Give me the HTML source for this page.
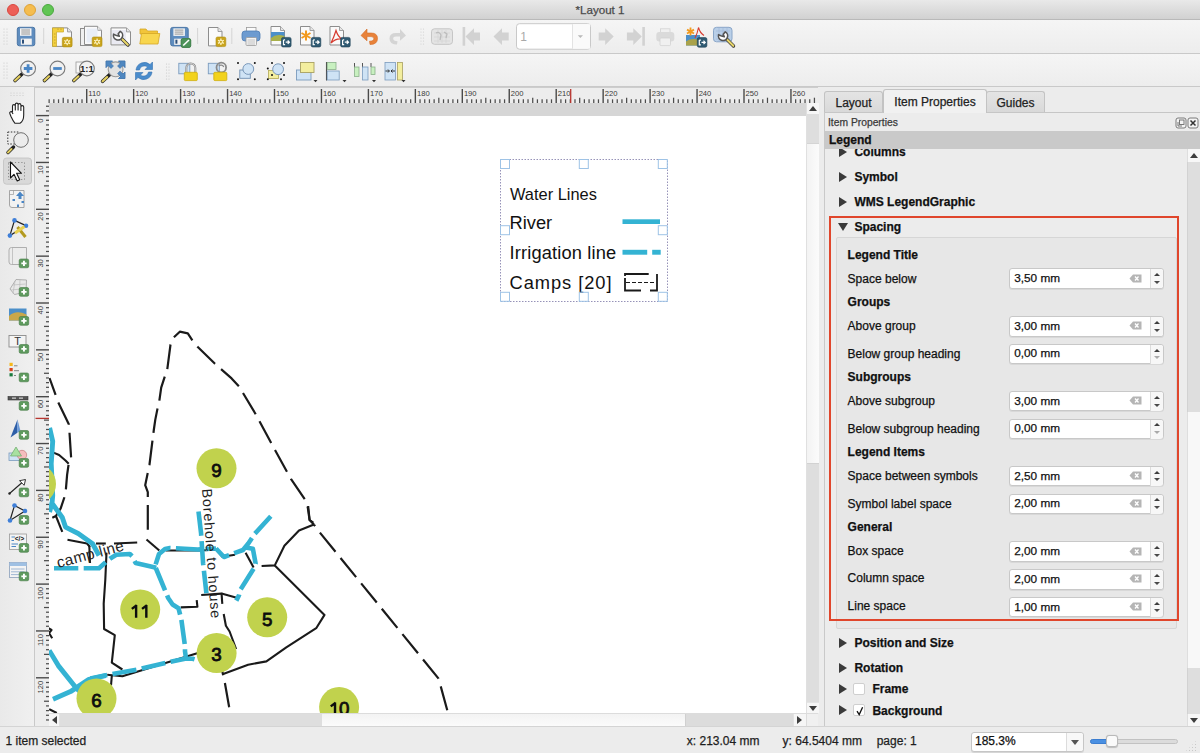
<!DOCTYPE html>
<html><head><meta charset="utf-8">
<style>
*{box-sizing:border-box;margin:0;padding:0}
html,body{width:1200px;height:753px;overflow:hidden;background:#ececec;font-family:"Liberation Sans",sans-serif;color:#111;-webkit-text-stroke:0.25px currentColor}
.a{position:absolute}
#title{left:0;top:0;width:1200px;height:20px;background:linear-gradient(#e9e9e9,#d1d1d1);border-bottom:1px solid #b9b9b9}
#title .t{left:0;width:1200px;top:3px;text-align:center;font-size:11.6px;color:#4a4a4a}
.tl{width:12px;height:12px;border-radius:50%;top:4px}
#tb1{left:0;top:20px;width:1200px;height:33.5px;background:linear-gradient(#f5f5f5,#ededed);border-bottom:1px solid #c9c9c9}
#tb2{left:0;top:53.5px;width:1200px;height:33.5px;background:linear-gradient(#f5f5f5,#ededed);border-bottom:1px solid #c9c9c9}
.grip{width:5px;height:20px;background-image:radial-gradient(circle,#c4c4c4 0.8px,transparent 1px);background-size:3px 3px}
.sep{width:1px;height:22px;background:#d6d6d6}
#rulerh{left:35px;top:87px;width:783px;height:16px;background:#ededed;overflow:hidden}
#rulerv{left:35px;top:103px;width:14px;height:623px;background:#ededed;overflow:hidden}
#canvas{left:49px;top:103px;width:757px;height:610px;background:#d6d6d6;overflow:hidden}
#page{left:0;top:13px;width:757px;height:600px;background:#fff}
#vscroll{left:806px;top:103px;width:12px;height:610px;background:#f4f4f4;border-left:1px solid #e0e0e0}
#hscroll{left:49px;top:713px;width:757px;height:13px;background:#f4f4f4;border-top:1px solid #dcdcdc}
#corner{left:806px;top:713px;width:12px;height:13px;background:#f0f0f0;border-left:1px solid #dcdcdc;border-top:1px solid #dcdcdc}
#toolbox{left:0;top:87px;width:35px;height:639px;background:linear-gradient(90deg,#e9e9e9,#f0f0f0);border-right:1px solid #c9c9c9}
#status{left:0;top:726px;width:1200px;height:27px;background:#ececec;border-top:1px solid #d4d4d4}
#status .s{top:7px;font-size:12px;color:#1e1e1e}
#panel{left:824px;top:112px;width:376px;height:614px;background:#ececec;border-left:1px solid #c9c9c9;border-top:1px solid #c6c6c6}
.tab{top:91px;height:21px;background:linear-gradient(#e4e4e4,#d9d9d9);border:1px solid #c3c3c3;border-bottom:none;border-radius:3px 3px 0 0;font-size:12px;text-align:center;padding-top:4px;color:#222}
.tab.sel{top:89px;height:24px;background:#f1f1f1;padding-top:5px}
.h{font-size:12px;font-weight:bold;color:#111}
.lb{font-size:12px;color:#1b1b1b}
.tri{width:0;height:0;border-top:5px solid transparent;border-bottom:5px solid transparent;border-left:8px solid #3a3a3a}
.trid{width:0;height:0;border-left:5.5px solid transparent;border-right:5.5px solid transparent;border-top:8px solid #3a3a3a}
.spin{width:155px;height:21px;background:#fff;border:1px solid #c8c8c8;border-radius:3px;box-shadow:0 1px 0 #d8d8d8}
.spin .v{left:4px;top:1.8px;font-size:11.8px;color:#111}
.spin .dv{left:140px;top:0;width:1px;height:19px;background:#dcdcdc}
.spin .bt{left:141px;top:0;width:12px;height:19px;background:#f7f7f7;border-radius:0 3px 3px 0}
.up{width:0;height:0;border-left:4px solid transparent;border-right:4px solid transparent;border-bottom:5px solid #4a4a4a}
.dn{width:0;height:0;border-left:4px solid transparent;border-right:4px solid transparent;border-top:5px solid #4a4a4a}
.clr{width:12px;height:8px}
.chk{width:12px;height:12px;background:#fff;border:1px solid #c9c9c9;border-radius:2px}
</style></head><body>

<!-- Title bar -->
<div id="title" class="a">
  <div class="a tl" style="left:7px;background:#ed5f57;border:0.5px solid #d9473f"></div>
  <div class="a tl" style="left:24px;background:#f5bd4f;border:0.5px solid #dea236"></div>
  <div class="a tl" style="left:42px;background:#61c554;border:0.5px solid #4aa93e"></div>
  <div class="a t">*Layout 1</div>
</div>

<!-- toolbars -->
<div id="tb1" class="a"></div>
<div id="tb2" class="a"></div>

<!-- left toolbox -->
<div id="toolbox" class="a"></div>
<svg class="a" style="left:0;top:0" width="1200" height="753"><g fill="#c8c8c8"><circle cx="4" cy="29" r="0.6"/><circle cx="4" cy="32" r="0.6"/><circle cx="4" cy="35" r="0.6"/><circle cx="4" cy="38" r="0.6"/><circle cx="4" cy="41" r="0.6"/><circle cx="4" cy="44" r="0.6"/><circle cx="7" cy="29" r="0.6"/><circle cx="7" cy="32" r="0.6"/><circle cx="7" cy="35" r="0.6"/><circle cx="7" cy="38" r="0.6"/><circle cx="7" cy="41" r="0.6"/><circle cx="7" cy="44" r="0.6"/></g><g transform="translate(16.8,26.8) scale(1)"><rect x="0.5" y="0.5" width="17.5" height="18.5" rx="2" fill="#5f8dbf" stroke="#4a76a6" stroke-width="1"/><rect x="3.2" y="1.5" width="11.5" height="7.5" fill="#f4f4f4"/><path d="M4.5 3.2 H13.2 M4.5 5.2 H13.2 M4.5 7.2 H13.2" stroke="#8a8a8a" stroke-width="0.9"/><rect x="4" y="11.8" width="11" height="6.2" fill="#f2f2f2"/><rect x="5.2" y="12.8" width="2" height="4" fill="#2b4f7a"/></g><line x1="43.7" y1="28" x2="43.7" y2="44" stroke="#d4d4d4"/><path d="M52.5 27.9 H67.5 L71.5 31.9 V46.4 H52.5 Z" fill="#fafafa" stroke="#8d8d8d" stroke-width="1"/><path d="M67.5 27.9 V31.9 H71.5" fill="#e6e6e6" stroke="#8d8d8d" stroke-width="0.8"/><path d="M52.5 27.9 H63.5 V32 H56.5 V46.4 H52.5 Z" fill="#f3d03e" stroke="#c9a82a" stroke-width="0.7"/><path d="M54 34 H55.5 M54 37 H55.5 M54 40 H55.5 M54 43 H55.5 M58 28.5 V30 M61 28.5 V30" stroke="#a8862a" stroke-width="0.6"/><rect x="62.3" y="37.3" width="9.8" height="9.6" rx="1.5" fill="#c9a41c" stroke="#b08e10" stroke-width="0.6"/><path d="M67.2 38.9 V45.3 M64.3 40.5 L70.1 43.699999999999996 M70.1 40.5 L64.3 43.699999999999996" stroke="#fff6c8" stroke-width="1.2"/><circle cx="67.2" cy="42.099999999999994" r="1.6" fill="#c9a41c" stroke="#fff6c8" stroke-width="0.9"/><rect x="80.5" y="28.5" width="16" height="17" fill="#f0f0f0" stroke="#8d8d8d"/><path d="M84.5 26.3 H97.5 L101.5 30.3 V44.5 H84.5 Z" fill="#fafafa" stroke="#8d8d8d" stroke-width="1"/><path d="M97.5 26.3 V30.3 H101.5" fill="#e6e6e6" stroke="#8d8d8d" stroke-width="0.8"/><rect x="86.5" y="28.5" width="11" height="14" fill="#e9eef7"/><rect x="92.2" y="37" width="9.8" height="9.6" rx="1.5" fill="#c9a41c" stroke="#b08e10" stroke-width="0.6"/><path d="M97.10000000000001 38.6 V45 M94.2 40.2 L100.0 43.4 M100.0 40.2 L94.2 43.4" stroke="#fff6c8" stroke-width="1.2"/><circle cx="97.10000000000001" cy="41.8" r="1.6" fill="#c9a41c" stroke="#fff6c8" stroke-width="0.9"/><path d="M111.0 27.9 H126.5 L130.5 31.9 V44.9 H111.0 Z" fill="#fafafa" stroke="#8d8d8d" stroke-width="1"/><path d="M126.5 27.9 V31.9 H130.5" fill="#e6e6e6" stroke="#8d8d8d" stroke-width="0.8"/><rect x="112" y="30" width="14" height="14" fill="#eaeaf2"/><path d="M119 36 L128 45" stroke="#333" stroke-width="3.4" stroke-linecap="round"/><path d="M121.5 38.5 L127.8 44.8" stroke="#e8d66a" stroke-width="2.1" stroke-linecap="round"/><path d="M113.6 34.2 A4.6 4.6 0 1 0 120.3 31.4 L118.2 33.8 L119.3 36.3 L116.6 35.6 Z" fill="#fff" stroke="#555" stroke-width="1.6" stroke-linejoin="round"/><path d="M140 29 H146 L147.5 31 H157.5 V34 H140 Z" fill="#f2c53a" stroke="#d5a726" stroke-width="0.8"/><path d="M139.8 44 L141.5 33.5 H159.8 L158 44 Z" fill="#f8d64e" stroke="#d5a726" stroke-width="0.8"/><g transform="translate(170.2,26.9) scale(1)"><rect x="0.5" y="0.5" width="17.5" height="18.5" rx="2" fill="#5f8dbf" stroke="#4a76a6" stroke-width="1"/><rect x="3.2" y="1.5" width="11.5" height="7.5" fill="#f4f4f4"/><path d="M4.5 3.2 H13.2 M4.5 5.2 H13.2 M4.5 7.2 H13.2" stroke="#8a8a8a" stroke-width="0.9"/><rect x="4" y="11.8" width="11" height="6.2" fill="#f2f2f2"/><rect x="5.2" y="12.8" width="2" height="4" fill="#2b4f7a"/></g><rect x="181.2" y="38.6" width="9.5" height="8.8" rx="1.6" fill="#4f9a5a" stroke="#447a44" stroke-width="0.6"/><path d="M185.95 40.4 V45.6 M183.29999999999998 43.0 H188.6" stroke="#fff" stroke-width="1.9"/><rect x="181.2" y="38.6" width="9.5" height="8.8" rx="1.6" fill="#4d935a" stroke="#3a7a46" stroke-width="0.6"/><path d="M183.2 45.5 L189 40" stroke="#fff" stroke-width="1.6"/><line x1="197.6" y1="28" x2="197.6" y2="44" stroke="#d4d4d4"/><path d="M208.5 27.5 H218.0 L222.0 31.5 V45.9 H208.5 Z" fill="#fafafa" stroke="#8d8d8d" stroke-width="1"/><path d="M218.0 27.5 V31.5 H222.0" fill="#e6e6e6" stroke="#8d8d8d" stroke-width="0.8"/><rect x="216" y="37" width="9.8" height="9.6" rx="1.5" fill="#c9a41c" stroke="#b08e10" stroke-width="0.6"/><path d="M220.9 38.6 V45 M218 40.2 L223.8 43.4 M223.8 40.2 L218 43.4" stroke="#fff6c8" stroke-width="1.2"/><circle cx="220.9" cy="41.8" r="1.6" fill="#c9a41c" stroke="#fff6c8" stroke-width="0.9"/><line x1="231.8" y1="28" x2="231.8" y2="44" stroke="#d4d4d4"/><rect x="246.5" y="27.5" width="9.5" height="5" fill="#fbfbfb" stroke="#9a9a9a" stroke-width="0.8"/><rect x="242" y="31" width="18" height="10" rx="3" fill="#6d9bd0" stroke="#4e7db5" stroke-width="0.8"/><rect x="246" y="37.5" width="10.5" height="8" rx="1" fill="#f3f3f3" stroke="#9a9a9a" stroke-width="0.8"/><path d="M247.5 40 H255 M247.5 42 H255 M247.5 44 H255" stroke="#b0b0b0" stroke-width="0.7"/><path d="M271.0 26.5 H280.5 L284.5 30.5 V45.0 H271.0 Z" fill="#fafafa" stroke="#8d8d8d" stroke-width="1"/><path d="M280.5 26.5 V30.5 H284.5" fill="#e6e6e6" stroke="#8d8d8d" stroke-width="0.8"/><rect x="271" y="32" width="13.5" height="9" fill="#4c8fc9"/><path d="M271 38 Q276 33.5 284.5 36 V41 H271 Z" fill="#a9b04a"/><rect x="281.5" y="37.4" width="9.6" height="9.6" rx="1.6" fill="#2f5a72" stroke="#1f4256" stroke-width="0.6"/><path d="M283.5 39.9 V44.6 H285.1 M283.5 39.9 H285.1 M285.7 42.199999999999996 H289.3 M287.7 40.5 L289.4 42.199999999999996 L287.7 43.9" fill="none" stroke="#fff" stroke-width="1.2"/><path d="M300.5 26.5 H310.0 L314.0 30.5 V45.0 H300.5 Z" fill="#fafafa" stroke="#8d8d8d" stroke-width="1"/><path d="M310.0 26.5 V30.5 H314.0" fill="#e6e6e6" stroke="#8d8d8d" stroke-width="0.8"/><path d="M306 30.5 V40.5 M301.5 33 L310.5 38 M310.5 33 L301.5 38" stroke="#f29a1e" stroke-width="2"/><rect x="311.2" y="37.4" width="9.6" height="9.6" rx="1.6" fill="#2f5a72" stroke="#1f4256" stroke-width="0.6"/><path d="M313.2 39.9 V44.6 H314.8 M313.2 39.9 H314.8 M315.4 42.199999999999996 H319.0 M317.4 40.5 L319.09999999999997 42.199999999999996 L317.4 43.9" fill="none" stroke="#fff" stroke-width="1.2"/><path d="M330.0 26.5 H339.5 L343.5 30.5 V45.0 H330.0 Z" fill="#fafafa" stroke="#8d8d8d" stroke-width="1"/><path d="M339.5 26.5 V30.5 H343.5" fill="#e6e6e6" stroke="#8d8d8d" stroke-width="0.8"/><path d="M331 43 Q334 37 336 30.5 Q338 37 342 39 Q336 38 331 43" fill="none" stroke="#d63a2e" stroke-width="1.2"/><rect x="340.6" y="37.4" width="9.6" height="9.6" rx="1.6" fill="#2f5a72" stroke="#1f4256" stroke-width="0.6"/><path d="M342.6 39.9 V44.6 H344.20000000000005 M342.6 39.9 H344.20000000000005 M344.8 42.199999999999996 H348.40000000000003 M346.8 40.5 L348.5 42.199999999999996 L346.8 43.9" fill="none" stroke="#fff" stroke-width="1.2"/><path d="M361 35.5 L367 29 V33 H371 Q377.5 33 377.5 38.5 Q377.5 44.5 370 44.5 L369.5 41.2 Q373.8 41.2 373.8 38.6 Q373.8 36.6 371 36.6 H367 V40.8 Z" fill="#e8823a" stroke="#d56c24" stroke-width="0.6"/><path d="M406 35.5 L400 29 V33 H396 Q389.5 33 389.5 38.5 Q389.5 44.5 397 44.5 L397.5 41.2 Q393.2 41.2 393.2 38.6 Q393.2 36.6 396 36.6 H400 V40.8 Z" fill="#d4d4d4"/><g fill="#cfcfcf"><circle cx="421" cy="29" r="0.6"/><circle cx="421" cy="32" r="0.6"/><circle cx="421" cy="35" r="0.6"/><circle cx="421" cy="38" r="0.6"/><circle cx="421" cy="41" r="0.6"/><circle cx="421" cy="44" r="0.6"/><circle cx="423.5" cy="29" r="0.6"/><circle cx="423.5" cy="32" r="0.6"/><circle cx="423.5" cy="35" r="0.6"/><circle cx="423.5" cy="38" r="0.6"/><circle cx="423.5" cy="41" r="0.6"/><circle cx="423.5" cy="44" r="0.6"/></g><rect x="431.5" y="28.8" width="21" height="15.5" rx="3" fill="#e4e4e4" stroke="#c6c6c6" stroke-width="1"/><path d="M434 33 H450 M434 37 H450 M434 41 H450 M438 30 V43 M442 30 V43 M446 30 V43" stroke="#d0d0d0" stroke-width="0.6"/><path d="M436 33 Q439 31 441 35 L440 40 M444 32 L447 34 L446 38" stroke="#bcbcbc" stroke-width="1.3" fill="none"/><rect x="462.6" y="27" width="2.6" height="18.7" fill="#d2d2d2"/><path d="M465.5 36.5 L474 28.3 V32.5 H480 V40.5 H474 V45 Z" fill="#d2d2d2"/><path d="M493.5 36.5 L502 28.3 V32.5 H508.7 V40.5 H502 V45 Z" fill="#d2d2d2"/><path d="M613.7 36.5 L605.2 28.3 V32.5 H598.7 V40.5 H605.2 V45 Z" fill="#d2d2d2"/><path d="M641.8 36.5 L633.3 28.3 V32.5 H626.9 V40.5 H633.3 V45 Z" fill="#d2d2d2"/><rect x="642.3" y="27" width="2.6" height="18.7" fill="#d2d2d2"/><rect x="516.5" y="23.7" width="74" height="25.5" rx="3" fill="#fff" stroke="#c9c9c9" stroke-width="1"/><path d="M572.6 24.2 V48.7" stroke="#e0e0e0"/><rect x="573" y="24.2" width="17" height="24.5" fill="#fafafa"/><path d="M577.8 35.2 H583 L580.4 38 Z" fill="#b9b9b9"/><text x="520.3" y="41" font-size="12" fill="#a9a9a9" font-family="Liberation Sans">1</text><rect x="660.5" y="28.8" width="9.5" height="4.5" fill="#f0f0f0" stroke="#d2d2d2" stroke-width="0.8"/><rect x="656.3" y="32" width="18" height="9.5" rx="3" fill="#dadada"/><rect x="660" y="38" width="10.5" height="7.6" rx="1" fill="#f0f0f0" stroke="#d2d2d2" stroke-width="0.8"/><rect x="686" y="35" width="14" height="10.5" fill="#4c8fc9"/><path d="M686 41.5 Q691 37.5 700 40 V45.5 H686 Z" fill="#a9a24a"/><path d="M690.5 27.6 V35.5 M687 29.6 L694 33.5 M694 29.6 L687 33.5" stroke="#f29a1e" stroke-width="1.8"/><path d="M695 38 Q697.5 33 698.5 27.5 Q700 33 704 35.5" fill="none" stroke="#d63a2e" stroke-width="1.1"/><rect x="697.3" y="37.6" width="9.6" height="9.6" rx="1.6" fill="#2f5a72" stroke="#1f4256" stroke-width="0.6"/><path d="M699.3 40.1 V44.800000000000004 H700.9 M699.3 40.1 H700.9 M701.5 42.4 H705.0999999999999 M703.5 40.7 L705.1999999999999 42.4 L703.5 44.1" fill="none" stroke="#fff" stroke-width="1.2"/><rect x="713.5" y="27.3" width="18.5" height="14.5" rx="3" fill="#b9cfe8" stroke="#8aa6c8" stroke-width="1"/><path d="M716 31 H730 M716 35 H730 M716 39 H730 M719 28 V41 M723 28 V41 M727 28 V41" stroke="#9fb6d4" stroke-width="0.6"/><path d="M724 36.5 L733.5 46" stroke="#333" stroke-width="3.4" stroke-linecap="round"/><path d="M726.5 39 L733.3 45.8" stroke="#e8d66a" stroke-width="2.1" stroke-linecap="round"/><path d="M718.6 34.7 A4.6 4.6 0 1 0 725.3 31.9 L723.2 34.3 L724.3 36.8 L721.6 36.1 Z" fill="#fff" stroke="#555" stroke-width="1.6" stroke-linejoin="round"/><g fill="#c8c8c8"><circle cx="4" cy="63" r="0.6"/><circle cx="4" cy="66" r="0.6"/><circle cx="4" cy="69" r="0.6"/><circle cx="4" cy="72" r="0.6"/><circle cx="4" cy="75" r="0.6"/><circle cx="4" cy="78" r="0.6"/><circle cx="7" cy="63" r="0.6"/><circle cx="7" cy="66" r="0.6"/><circle cx="7" cy="69" r="0.6"/><circle cx="7" cy="72" r="0.6"/><circle cx="7" cy="75" r="0.6"/><circle cx="7" cy="78" r="0.6"/></g><path d="M15.100000000000001 80.5 L22.6 73.5" stroke="#222" stroke-width="3.6" stroke-linecap="round"/><path d="M15.100000000000001 80.5 L19.6 76.3" stroke="#e3cf62" stroke-width="2.2" stroke-linecap="round"/><circle cx="28.1" cy="68.5" r="7.4" fill="#f1f1f1" stroke="#7b7b7b" stroke-width="1.1"/><path d="M28.1 64.2 V72.8 M23.8 68.5 H32.4" stroke="#4a86c5" stroke-width="2.8"/><path d="M44.5 80.5 L52.0 73.5" stroke="#222" stroke-width="3.6" stroke-linecap="round"/><path d="M44.5 80.5 L49.0 76.3" stroke="#e3cf62" stroke-width="2.2" stroke-linecap="round"/><circle cx="57.5" cy="68.5" r="7.4" fill="#f1f1f1" stroke="#7b7b7b" stroke-width="1.1"/><path d="M53.2 68.5 H61.8" stroke="#4a86c5" stroke-width="2.8"/><rect x="76" y="62" width="7" height="11" fill="#f7f7f7" stroke="#9a9a9a" stroke-width="0.8"/><path d="M73.9 80.5 L81.4 73.5" stroke="#222" stroke-width="3.6" stroke-linecap="round"/><path d="M73.9 80.5 L78.4 76.3" stroke="#e3cf62" stroke-width="2.2" stroke-linecap="round"/><circle cx="86.9" cy="68.5" r="7.4" fill="#f1f1f1" stroke="#7b7b7b" stroke-width="1.1"/><text x="86.9" y="72.3" text-anchor="middle" font-size="9.5" font-weight="bold" fill="#222" font-family="Liberation Sans">1:1</text><rect x="106" y="61" width="19" height="17.5" fill="#ededed"/><path d="M106 61 H112.5 L110.5 63 L113.5 66 L111 68.5 L108 65.5 L106 67.5 Z M125 61 V67.5 L123 65.5 L120 68.5 L117.5 66 L120.5 63 L118.5 61 Z M125 78.5 H118.5 L120.5 76.5 L117.5 73.5 L120 71 L123 74 L125 72 Z" fill="#4f87c0" stroke="#3a6ea6" stroke-width="0.5"/><path d="M102.6 81.3 L110.1 74.3" stroke="#222" stroke-width="3.6" stroke-linecap="round"/><path d="M102.6 81.3 L107.1 77.1" stroke="#e3cf62" stroke-width="2.2" stroke-linecap="round"/><circle cx="115.6" cy="69.3" r="7.4" fill="#e2e2e2" stroke="#9a9a9a" stroke-width="1.1"/><circle cx="115.6" cy="69.3" r="0" /><path d="M106 61 H112.5 L110.5 63 L113.5 66 L111 68.5 L108 65.5 L106 67.5 Z M125 61 V67.5 L123 65.5 L120 68.5 L117.5 66 L120.5 63 L118.5 61 Z M125 78.5 H118.5 L120.5 76.5 L117.5 73.5 L120 71 L123 74 L125 72 Z" fill="#4f87c0" stroke="#3a6ea6" stroke-width="0.5"/><path d="M136 70 A8.5 8.5 0 0 1 150 64.5 L152.5 62 V69.5 H145 L147.5 67 A5 5 0 0 0 139.5 70 Z" fill="#4a8ccc" stroke="#3572b0" stroke-width="0.6"/><path d="M152 72 A8.5 8.5 0 0 1 138 77.5 L135.5 80 V72.5 H143 L140.5 75 A5 5 0 0 0 148.5 72 Z" fill="#4a8ccc" stroke="#3572b0" stroke-width="0.6"/><g fill="#c8c8c8"><circle cx="166.5" cy="64" r="0.6"/><circle cx="166.5" cy="67" r="0.6"/><circle cx="166.5" cy="70" r="0.6"/><circle cx="166.5" cy="73" r="0.6"/><circle cx="166.5" cy="76" r="0.6"/><circle cx="166.5" cy="79" r="0.6"/><circle cx="169" cy="64" r="0.6"/><circle cx="169" cy="67" r="0.6"/><circle cx="169" cy="70" r="0.6"/><circle cx="169" cy="73" r="0.6"/><circle cx="169" cy="76" r="0.6"/><circle cx="169" cy="79" r="0.6"/></g><rect x="178.8" y="63.3" width="11" height="10.5" fill="#cfe3f5" stroke="#7b9bbd" stroke-width="0.9"/><path d="M186.3 73 V68 A4.5 4.5 0 0 1 195.3 68 V73" fill="none" stroke="#8a8a8a" stroke-width="2"/><path d="M186.3 73 V68 A4.5 4.5 0 0 1 195.3 68 V73" fill="none" stroke="#d9d9d9" stroke-width="0.8"/><rect x="184.3" y="72.3" width="13" height="8.3" rx="1" fill="#f2d21c" stroke="#cfae0a" stroke-width="0.8"/><rect x="208.3" y="63.3" width="11" height="10.5" fill="#cfe3f5" stroke="#7b9bbd" stroke-width="0.9"/><circle cx="221.3" cy="67.5" r="4.8" fill="none" stroke="#8a8a8a" stroke-width="1.8"/><path d="M218.8 66 A3 3 0 0 1 223.8 67" fill="none" stroke="#8a8a8a" stroke-width="1.2"/><rect x="213.8" y="72.3" width="13" height="8.3" rx="1" fill="#f2d21c" stroke="#cfae0a" stroke-width="0.8"/><rect x="239.8" y="70" width="10.5" height="8.3" fill="#cfe3f5" stroke="#6f8fb2" stroke-width="0.9"/><circle cx="248.3" cy="69" r="5.4" fill="#cfe3f5" stroke="#6f8fb2" stroke-width="0.9"/><g fill="#111"><circle cx="238" cy="63" r="1"/><circle cx="238" cy="79.3" r="1"/><circle cx="254.8" cy="63" r="1"/><circle cx="254.8" cy="79.3" r="1"/></g><rect x="268.5" y="70.5" width="10" height="8" fill="#f3ee9e" stroke="#b9b060" stroke-width="0.9"/><circle cx="278.1" cy="69.2" r="5.4" fill="#cfe3f5" stroke="#6f8fb2" stroke-width="0.9"/><g fill="#111"><circle cx="272" cy="63" r="1"/><circle cx="284" cy="63" r="1"/><circle cx="267.8" cy="68.5" r="1"/><circle cx="284" cy="75" r="1"/><circle cx="267.8" cy="79.3" r="1"/><circle cx="281" cy="79.3" r="1"/><circle cx="272" cy="75" r="1"/></g><rect x="296.5" y="70" width="14.5" height="10" fill="#cfe3f5" stroke="#7b9bbd" stroke-width="0.9"/><rect x="300.5" y="62.5" width="13.5" height="10" fill="#f3ee9e" stroke="#a8a060" stroke-width="0.9"/><path d="M313.5 80 H317.5 L315.5 82.3 Z" fill="#333"/><path d="M326.5 62 V80.5" stroke="#444" stroke-width="1.1"/><rect x="327.2" y="62.5" width="8.8" height="7" fill="#c8f0c0" stroke="#8ab08a" stroke-width="0.8"/><rect x="327.2" y="71" width="12" height="9" fill="#cfe3f5" stroke="#7b9bbd" stroke-width="0.8"/><path d="M342.5 80 H346.5 L344.5 82.3 Z" fill="#333"/><path d="M354.5 63 V68 M362.5 63 V68 M371 63 V67" stroke="#555" stroke-width="1"/><rect x="354.5" y="67" width="4.5" height="9.5" fill="#c8f0c0" stroke="#8ab08a" stroke-width="0.8"/><rect x="362.5" y="67" width="5.5" height="13" fill="#cfe3f5" stroke="#7b9bbd" stroke-width="0.8"/><rect x="371" y="67" width="4" height="7.5" fill="#c8f0c0" stroke="#8ab08a" stroke-width="0.8"/><path d="M372 80 H376 L374 82.3 Z" fill="#333"/><rect x="385" y="62.5" width="10.5" height="17.5" fill="#cfe3f5" stroke="#7b9bbd" stroke-width="0.8"/><rect x="397.5" y="62.5" width="5" height="17.5" fill="#f3ee9e" stroke="#a8a060" stroke-width="0.8"/><path d="M385.5 71 H389 M388 69.5 L389.5 71 L388 72.5 M395 71 H391.5 M392.5 69.5 L391 71 L392.5 72.5" stroke="#222" stroke-width="0.9" fill="none"/><path d="M401.5 80 H405.5 L403.5 82.3 Z" fill="#333"/><g fill="#c8c8c8"><circle cx="11" cy="93" r="0.55"/><circle cx="11" cy="95.5" r="0.55"/><circle cx="14" cy="93" r="0.55"/><circle cx="14" cy="95.5" r="0.55"/><circle cx="17" cy="93" r="0.55"/><circle cx="17" cy="95.5" r="0.55"/><circle cx="20" cy="93" r="0.55"/><circle cx="20" cy="95.5" r="0.55"/><circle cx="23" cy="93" r="0.55"/><circle cx="23" cy="95.5" r="0.55"/></g><path d="M12.5 112 V106 A1.4 1.4 0 0 1 15.3 106 V110 V104.5 A1.4 1.4 0 0 1 18.1 104.5 V110 V105 A1.4 1.4 0 0 1 20.9 105 V110.5 V107 A1.4 1.4 0 0 1 23.7 107 V115 Q23.7 121 20 123.3 H15 Q13 121 11 116.5 L9.8 113.5 A1.3 1.3 0 0 1 12.3 112.5 L13 114" fill="#fff" stroke="#222" stroke-width="1.1" stroke-linejoin="round"/><rect x="7.8" y="132" width="11" height="12" fill="none" stroke="#333" stroke-width="1" stroke-dasharray="1.5 1.5"/><path d="M8 152.5 L13.5 147" stroke="#222" stroke-width="3.4" stroke-linecap="round"/><path d="M8 152.5 L11.5 149" stroke="#e3cf62" stroke-width="2" stroke-linecap="round"/><circle cx="21" cy="140" r="7.3" fill="#ececec" stroke="#6f6f6f" stroke-width="1"/><rect x="3.5" y="158" width="28" height="26.2" rx="3" fill="#d9d9d9" stroke="#c4c4c4" stroke-width="0.9"/><rect x="8.5" y="162.5" width="16" height="17" fill="none" stroke="#777" stroke-width="0.8" stroke-dasharray="1.2 2"/><path d="M10.5 162 V178 L14 174.3 L17.2 181 L19.7 179.8 L16.6 173.3 H21.5 Z" fill="#fff" stroke="#111" stroke-width="1.1" stroke-linejoin="round"/><path d="M9.5 190.5 H24 V207.5 H12 Q9.5 207.5 9.5 205 Z" fill="#f2f2f2" stroke="#9c9c9c" stroke-width="0.9"/><path d="M13.5 194.5 V190.5 M9.5 194.5 H13.5" stroke="#9c9c9c" stroke-width="0.7"/><path d="M20 191.5 L24 196 H21.5 V199 H18.5 V196 H16 Z" fill="#4a86c5"/><path d="M12.5 199 H15 V201 H12.5 Z M21.5 201 H24 V203 H21.5 Z M17 204.5 H19 V207 H17 Z" fill="#4a86c5"/><path d="M14.5 220.4 L26 225.7 L9.9 235.6 Z" fill="none" stroke="#222" stroke-width="1.2"/><circle cx="14.5" cy="220.4" r="2.3" fill="#3f7fd8"/><circle cx="26" cy="225.7" r="2.3" fill="#3f7fd8"/><circle cx="9.9" cy="235.6" r="2.3" fill="#3f7fd8"/><path d="M17.5 227 L25.5 237" stroke="#b39a20" stroke-width="3"/><path d="M15 233 L24.5 226.5" stroke="#e8d050" stroke-width="3.2"/><path d="M11.5 247.5 H26.5 V264.5 H11.5 Q9 264.5 9 262.0 V250.0 Q9 247.5 11.5 247.5 Z" fill="#ececec" stroke="#a8a8a8" stroke-width="0.9"/><path d="M12.5 248.0 V264.0" stroke="#c4c4c4" stroke-width="1"/><rect x="19.2" y="259" width="9.5" height="8.8" rx="1.6" fill="#5e9a5e" stroke="#447a44" stroke-width="0.6"/><path d="M23.95 260.8 V266 M21.3 263.4 H26.6" stroke="#fff" stroke-width="1.9"/><path d="M10 289 L16 279.5 L26.5 280 L26 292 L14.5 294.5 Z" fill="#e8e8e8" stroke="#a8a8a8" stroke-width="0.9"/><path d="M12.5 285 L25.5 284 M11 290 L26 288.5 M15 281 L13 293.5 M20 280 L19.5 293.5" stroke="#bcbcbc" stroke-width="0.7"/><rect x="19.2" y="287.5" width="9.5" height="8.8" rx="1.6" fill="#5e9a5e" stroke="#447a44" stroke-width="0.6"/><path d="M23.95 289.3 V294.5 M21.3 291.9 H26.6" stroke="#fff" stroke-width="1.9"/><rect x="9" y="308.5" width="17.5" height="12" fill="#4c8fc9"/><path d="M9 316 Q16 309.5 26.5 314.5 V320.5 H9 Z" fill="#c9a74a"/><rect x="19.2" y="316.5" width="9.5" height="8.8" rx="1.6" fill="#5e9a5e" stroke="#447a44" stroke-width="0.6"/><path d="M23.95 318.3 V323.5 M21.3 320.9 H26.6" stroke="#fff" stroke-width="1.9"/><rect x="9" y="335.5" width="17" height="11.5" fill="#f4f4f4" stroke="#8c8c8c" stroke-width="0.9"/><text x="17.5" y="345.3" text-anchor="middle" font-size="11" fill="#333" font-family="Liberation Sans">T</text><rect x="19.2" y="344.5" width="9.5" height="8.8" rx="1.6" fill="#5e9a5e" stroke="#447a44" stroke-width="0.6"/><path d="M23.95 346.3 V351.5 M21.3 348.9 H26.6" stroke="#fff" stroke-width="1.9"/><rect x="9.5" y="362.8" width="3.2" height="3.2" fill="#f6b81a"/><rect x="9.5" y="368" width="3.2" height="3.2" fill="#d9421c"/><rect x="9.5" y="373.2" width="3.2" height="3.2" fill="#187a3c"/><path d="M14 365.8 H17.5 M14 370.7 H19 M14 375.5 H16" stroke="#777" stroke-width="0.9"/><rect x="19.2" y="373" width="9.5" height="8.8" rx="1.6" fill="#5e9a5e" stroke="#447a44" stroke-width="0.6"/><path d="M23.95 374.8 V380 M21.3 377.4 H26.6" stroke="#fff" stroke-width="1.9"/><rect x="8" y="396.5" width="20" height="3.5" fill="#555" stroke="#333" stroke-width="0.6"/><path d="M12 398.2 H16 M19 398.2 H23" stroke="#cfcfcf" stroke-width="1.3"/><rect x="19.2" y="401.5" width="9.5" height="8.8" rx="1.6" fill="#5e9a5e" stroke="#447a44" stroke-width="0.6"/><path d="M23.95 403.3 V408.5 M21.3 405.9 H26.6" stroke="#fff" stroke-width="1.9"/><path d="M17.5 419.5 L10.5 437.5 L17 433 Z" fill="#2e5fa8"/><path d="M17.5 419.5 L20.5 431 L17 433 Z" fill="#6d9bd8"/><rect x="19.2" y="430.5" width="9.5" height="8.8" rx="1.6" fill="#5e9a5e" stroke="#447a44" stroke-width="0.6"/><path d="M23.95 432.3 V437.5 M21.3 434.9 H26.6" stroke="#fff" stroke-width="1.9"/><rect x="9" y="453" width="13" height="7.5" fill="#cfe3f5" stroke="#7b9bbd" stroke-width="0.8"/><circle cx="22" cy="455" r="4.7" fill="#f5bdbd" stroke="#c47a7a" stroke-width="0.7"/><path d="M16 447 L21.5 456 H10.5 Z" fill="#a8e0a0" stroke="#6aa86a" stroke-width="0.7"/><rect x="19.2" y="458.5" width="9.5" height="8.8" rx="1.6" fill="#5e9a5e" stroke="#447a44" stroke-width="0.6"/><path d="M23.95 460.3 V465.5 M21.3 462.9 H26.6" stroke="#fff" stroke-width="1.9"/><path d="M9.5 493.5 L25 480" stroke="#222" stroke-width="1.1"/><path d="M25.5 479.5 L19.5 480.7 L24.2 485.3 Z" fill="#fff" stroke="#222" stroke-width="0.9"/><circle cx="9.5" cy="493.5" r="1.2" fill="#222"/><rect x="19.2" y="488" width="9.5" height="8.8" rx="1.6" fill="#5e9a5e" stroke="#447a44" stroke-width="0.6"/><path d="M23.95 489.8 V495 M21.3 492.4 H26.6" stroke="#fff" stroke-width="1.9"/><path d="M14.5 505.5 L25 511 L10 520.5 Z" fill="none" stroke="#222" stroke-width="1.2"/><circle cx="14.5" cy="505.5" r="2.3" fill="#3f7fd8"/><circle cx="25" cy="511" r="2.3" fill="#3f7fd8"/><circle cx="10" cy="520.5" r="2.3" fill="#3f7fd8"/><rect x="19.2" y="515.5" width="9.5" height="8.8" rx="1.6" fill="#5e9a5e" stroke="#447a44" stroke-width="0.6"/><path d="M23.95 517.3 V522.5 M21.3 519.9 H26.6" stroke="#fff" stroke-width="1.9"/><rect x="9.5" y="534" width="17" height="15.5" fill="#f4f4f4" stroke="#9a9a9a" stroke-width="0.8"/><path d="M11.5 537 H15 M11.5 540.5 H14 M11.5 544 H18 M11.5 546.5 H16" stroke="#4a86c5" stroke-width="1"/><text x="19.5" y="541.3" text-anchor="middle" font-size="6.5" font-weight="bold" fill="#222" font-family="Liberation Sans">&lt;/&gt;</text><rect x="19.2" y="543.5" width="9.5" height="8.8" rx="1.6" fill="#5e9a5e" stroke="#447a44" stroke-width="0.6"/><path d="M23.95 545.3 V550.5 M21.3 547.9 H26.6" stroke="#fff" stroke-width="1.9"/><rect x="9.5" y="562.5" width="17" height="15" fill="#f4f4f4" stroke="#8aa0bb" stroke-width="0.8"/><rect x="9.5" y="562.5" width="17" height="3.5" fill="#9fc0e3"/><path d="M11 569 H24.5 M11 571.8 H24.5 M11 574.6 H24.5" stroke="#8aa8cc" stroke-width="0.8"/><rect x="19.2" y="572" width="9.5" height="8.8" rx="1.6" fill="#5e9a5e" stroke="#447a44" stroke-width="0.6"/><path d="M23.95 573.8 V579 M21.3 576.4 H26.6" stroke="#fff" stroke-width="1.9"/></svg>

<!-- rulers -->
<div id="rulerh" class="a"><svg class="a" style="left:0;top:0" width="783" height="16"><line x1="0" y1="0.5" x2="783" y2="0.5" stroke="#cdcdcd" stroke-width="1"/><line x1="14.14" y1="12.3" x2="14.14" y2="16" stroke="#4d4d4d" stroke-width="1.25"/><line x1="18.84" y1="12.3" x2="18.84" y2="16" stroke="#4d4d4d" stroke-width="1.25"/><line x1="23.53" y1="12.3" x2="23.53" y2="16" stroke="#4d4d4d" stroke-width="1.25"/><line x1="28.23" y1="10.7" x2="28.23" y2="16" stroke="#4d4d4d" stroke-width="1.25"/><line x1="32.92" y1="12.3" x2="32.92" y2="16" stroke="#4d4d4d" stroke-width="1.25"/><line x1="37.62" y1="12.3" x2="37.62" y2="16" stroke="#4d4d4d" stroke-width="1.25"/><line x1="42.31" y1="12.3" x2="42.31" y2="16" stroke="#4d4d4d" stroke-width="1.25"/><line x1="47.00" y1="12.3" x2="47.00" y2="16" stroke="#4d4d4d" stroke-width="1.25"/><line x1="51.70" y1="2" x2="51.70" y2="16" stroke="#4a4a4a" stroke-width="1.4"/><text x="53.30" y="9.3" font-size="7.6" fill="#3a3a3a" font-family="Liberation Sans">110</text><line x1="56.40" y1="12.3" x2="56.40" y2="16" stroke="#4d4d4d" stroke-width="1.25"/><line x1="61.09" y1="12.3" x2="61.09" y2="16" stroke="#4d4d4d" stroke-width="1.25"/><line x1="65.78" y1="12.3" x2="65.78" y2="16" stroke="#4d4d4d" stroke-width="1.25"/><line x1="70.48" y1="12.3" x2="70.48" y2="16" stroke="#4d4d4d" stroke-width="1.25"/><line x1="75.18" y1="10.7" x2="75.18" y2="16" stroke="#4d4d4d" stroke-width="1.25"/><line x1="79.87" y1="12.3" x2="79.87" y2="16" stroke="#4d4d4d" stroke-width="1.25"/><line x1="84.56" y1="12.3" x2="84.56" y2="16" stroke="#4d4d4d" stroke-width="1.25"/><line x1="89.26" y1="12.3" x2="89.26" y2="16" stroke="#4d4d4d" stroke-width="1.25"/><line x1="93.96" y1="12.3" x2="93.96" y2="16" stroke="#4d4d4d" stroke-width="1.25"/><line x1="98.65" y1="2" x2="98.65" y2="16" stroke="#4a4a4a" stroke-width="1.4"/><text x="100.25" y="9.3" font-size="7.6" fill="#3a3a3a" font-family="Liberation Sans">120</text><line x1="103.34" y1="12.3" x2="103.34" y2="16" stroke="#4d4d4d" stroke-width="1.25"/><line x1="108.04" y1="12.3" x2="108.04" y2="16" stroke="#4d4d4d" stroke-width="1.25"/><line x1="112.74" y1="12.3" x2="112.74" y2="16" stroke="#4d4d4d" stroke-width="1.25"/><line x1="117.43" y1="12.3" x2="117.43" y2="16" stroke="#4d4d4d" stroke-width="1.25"/><line x1="122.12" y1="10.7" x2="122.12" y2="16" stroke="#4d4d4d" stroke-width="1.25"/><line x1="126.82" y1="12.3" x2="126.82" y2="16" stroke="#4d4d4d" stroke-width="1.25"/><line x1="131.51" y1="12.3" x2="131.51" y2="16" stroke="#4d4d4d" stroke-width="1.25"/><line x1="136.21" y1="12.3" x2="136.21" y2="16" stroke="#4d4d4d" stroke-width="1.25"/><line x1="140.91" y1="12.3" x2="140.91" y2="16" stroke="#4d4d4d" stroke-width="1.25"/><line x1="145.60" y1="2" x2="145.60" y2="16" stroke="#4a4a4a" stroke-width="1.4"/><text x="147.20" y="9.3" font-size="7.6" fill="#3a3a3a" font-family="Liberation Sans">130</text><line x1="150.30" y1="12.3" x2="150.30" y2="16" stroke="#4d4d4d" stroke-width="1.25"/><line x1="154.99" y1="12.3" x2="154.99" y2="16" stroke="#4d4d4d" stroke-width="1.25"/><line x1="159.69" y1="12.3" x2="159.69" y2="16" stroke="#4d4d4d" stroke-width="1.25"/><line x1="164.38" y1="12.3" x2="164.38" y2="16" stroke="#4d4d4d" stroke-width="1.25"/><line x1="169.07" y1="10.7" x2="169.07" y2="16" stroke="#4d4d4d" stroke-width="1.25"/><line x1="173.77" y1="12.3" x2="173.77" y2="16" stroke="#4d4d4d" stroke-width="1.25"/><line x1="178.47" y1="12.3" x2="178.47" y2="16" stroke="#4d4d4d" stroke-width="1.25"/><line x1="183.16" y1="12.3" x2="183.16" y2="16" stroke="#4d4d4d" stroke-width="1.25"/><line x1="187.86" y1="12.3" x2="187.86" y2="16" stroke="#4d4d4d" stroke-width="1.25"/><line x1="192.55" y1="2" x2="192.55" y2="16" stroke="#4a4a4a" stroke-width="1.4"/><text x="194.15" y="9.3" font-size="7.6" fill="#3a3a3a" font-family="Liberation Sans">140</text><line x1="197.25" y1="12.3" x2="197.25" y2="16" stroke="#4d4d4d" stroke-width="1.25"/><line x1="201.94" y1="12.3" x2="201.94" y2="16" stroke="#4d4d4d" stroke-width="1.25"/><line x1="206.63" y1="12.3" x2="206.63" y2="16" stroke="#4d4d4d" stroke-width="1.25"/><line x1="211.33" y1="12.3" x2="211.33" y2="16" stroke="#4d4d4d" stroke-width="1.25"/><line x1="216.03" y1="10.7" x2="216.03" y2="16" stroke="#4d4d4d" stroke-width="1.25"/><line x1="220.72" y1="12.3" x2="220.72" y2="16" stroke="#4d4d4d" stroke-width="1.25"/><line x1="225.42" y1="12.3" x2="225.42" y2="16" stroke="#4d4d4d" stroke-width="1.25"/><line x1="230.11" y1="12.3" x2="230.11" y2="16" stroke="#4d4d4d" stroke-width="1.25"/><line x1="234.81" y1="12.3" x2="234.81" y2="16" stroke="#4d4d4d" stroke-width="1.25"/><line x1="239.50" y1="2" x2="239.50" y2="16" stroke="#4a4a4a" stroke-width="1.4"/><text x="241.10" y="9.3" font-size="7.6" fill="#3a3a3a" font-family="Liberation Sans">150</text><line x1="244.19" y1="12.3" x2="244.19" y2="16" stroke="#4d4d4d" stroke-width="1.25"/><line x1="248.89" y1="12.3" x2="248.89" y2="16" stroke="#4d4d4d" stroke-width="1.25"/><line x1="253.59" y1="12.3" x2="253.59" y2="16" stroke="#4d4d4d" stroke-width="1.25"/><line x1="258.28" y1="12.3" x2="258.28" y2="16" stroke="#4d4d4d" stroke-width="1.25"/><line x1="262.98" y1="10.7" x2="262.98" y2="16" stroke="#4d4d4d" stroke-width="1.25"/><line x1="267.67" y1="12.3" x2="267.67" y2="16" stroke="#4d4d4d" stroke-width="1.25"/><line x1="272.37" y1="12.3" x2="272.37" y2="16" stroke="#4d4d4d" stroke-width="1.25"/><line x1="277.06" y1="12.3" x2="277.06" y2="16" stroke="#4d4d4d" stroke-width="1.25"/><line x1="281.75" y1="12.3" x2="281.75" y2="16" stroke="#4d4d4d" stroke-width="1.25"/><line x1="286.45" y1="2" x2="286.45" y2="16" stroke="#4a4a4a" stroke-width="1.4"/><text x="288.05" y="9.3" font-size="7.6" fill="#3a3a3a" font-family="Liberation Sans">160</text><line x1="291.15" y1="12.3" x2="291.15" y2="16" stroke="#4d4d4d" stroke-width="1.25"/><line x1="295.84" y1="12.3" x2="295.84" y2="16" stroke="#4d4d4d" stroke-width="1.25"/><line x1="300.54" y1="12.3" x2="300.54" y2="16" stroke="#4d4d4d" stroke-width="1.25"/><line x1="305.23" y1="12.3" x2="305.23" y2="16" stroke="#4d4d4d" stroke-width="1.25"/><line x1="309.93" y1="10.7" x2="309.93" y2="16" stroke="#4d4d4d" stroke-width="1.25"/><line x1="314.62" y1="12.3" x2="314.62" y2="16" stroke="#4d4d4d" stroke-width="1.25"/><line x1="319.31" y1="12.3" x2="319.31" y2="16" stroke="#4d4d4d" stroke-width="1.25"/><line x1="324.01" y1="12.3" x2="324.01" y2="16" stroke="#4d4d4d" stroke-width="1.25"/><line x1="328.70" y1="12.3" x2="328.70" y2="16" stroke="#4d4d4d" stroke-width="1.25"/><line x1="333.40" y1="2" x2="333.40" y2="16" stroke="#4a4a4a" stroke-width="1.4"/><text x="335.00" y="9.3" font-size="7.6" fill="#3a3a3a" font-family="Liberation Sans">170</text><line x1="338.10" y1="12.3" x2="338.10" y2="16" stroke="#4d4d4d" stroke-width="1.25"/><line x1="342.79" y1="12.3" x2="342.79" y2="16" stroke="#4d4d4d" stroke-width="1.25"/><line x1="347.49" y1="12.3" x2="347.49" y2="16" stroke="#4d4d4d" stroke-width="1.25"/><line x1="352.18" y1="12.3" x2="352.18" y2="16" stroke="#4d4d4d" stroke-width="1.25"/><line x1="356.88" y1="10.7" x2="356.88" y2="16" stroke="#4d4d4d" stroke-width="1.25"/><line x1="361.57" y1="12.3" x2="361.57" y2="16" stroke="#4d4d4d" stroke-width="1.25"/><line x1="366.26" y1="12.3" x2="366.26" y2="16" stroke="#4d4d4d" stroke-width="1.25"/><line x1="370.96" y1="12.3" x2="370.96" y2="16" stroke="#4d4d4d" stroke-width="1.25"/><line x1="375.66" y1="12.3" x2="375.66" y2="16" stroke="#4d4d4d" stroke-width="1.25"/><line x1="380.35" y1="2" x2="380.35" y2="16" stroke="#4a4a4a" stroke-width="1.4"/><text x="381.95" y="9.3" font-size="7.6" fill="#3a3a3a" font-family="Liberation Sans">180</text><line x1="385.05" y1="12.3" x2="385.05" y2="16" stroke="#4d4d4d" stroke-width="1.25"/><line x1="389.74" y1="12.3" x2="389.74" y2="16" stroke="#4d4d4d" stroke-width="1.25"/><line x1="394.44" y1="12.3" x2="394.44" y2="16" stroke="#4d4d4d" stroke-width="1.25"/><line x1="399.13" y1="12.3" x2="399.13" y2="16" stroke="#4d4d4d" stroke-width="1.25"/><line x1="403.82" y1="10.7" x2="403.82" y2="16" stroke="#4d4d4d" stroke-width="1.25"/><line x1="408.52" y1="12.3" x2="408.52" y2="16" stroke="#4d4d4d" stroke-width="1.25"/><line x1="413.22" y1="12.3" x2="413.22" y2="16" stroke="#4d4d4d" stroke-width="1.25"/><line x1="417.91" y1="12.3" x2="417.91" y2="16" stroke="#4d4d4d" stroke-width="1.25"/><line x1="422.61" y1="12.3" x2="422.61" y2="16" stroke="#4d4d4d" stroke-width="1.25"/><line x1="427.30" y1="2" x2="427.30" y2="16" stroke="#4a4a4a" stroke-width="1.4"/><text x="428.90" y="9.3" font-size="7.6" fill="#3a3a3a" font-family="Liberation Sans">190</text><line x1="432.00" y1="12.3" x2="432.00" y2="16" stroke="#4d4d4d" stroke-width="1.25"/><line x1="436.69" y1="12.3" x2="436.69" y2="16" stroke="#4d4d4d" stroke-width="1.25"/><line x1="441.38" y1="12.3" x2="441.38" y2="16" stroke="#4d4d4d" stroke-width="1.25"/><line x1="446.08" y1="12.3" x2="446.08" y2="16" stroke="#4d4d4d" stroke-width="1.25"/><line x1="450.78" y1="10.7" x2="450.78" y2="16" stroke="#4d4d4d" stroke-width="1.25"/><line x1="455.47" y1="12.3" x2="455.47" y2="16" stroke="#4d4d4d" stroke-width="1.25"/><line x1="460.17" y1="12.3" x2="460.17" y2="16" stroke="#4d4d4d" stroke-width="1.25"/><line x1="464.86" y1="12.3" x2="464.86" y2="16" stroke="#4d4d4d" stroke-width="1.25"/><line x1="469.56" y1="12.3" x2="469.56" y2="16" stroke="#4d4d4d" stroke-width="1.25"/><line x1="474.25" y1="2" x2="474.25" y2="16" stroke="#4a4a4a" stroke-width="1.4"/><text x="475.85" y="9.3" font-size="7.6" fill="#3a3a3a" font-family="Liberation Sans">200</text><line x1="478.95" y1="12.3" x2="478.95" y2="16" stroke="#4d4d4d" stroke-width="1.25"/><line x1="483.64" y1="12.3" x2="483.64" y2="16" stroke="#4d4d4d" stroke-width="1.25"/><line x1="488.34" y1="12.3" x2="488.34" y2="16" stroke="#4d4d4d" stroke-width="1.25"/><line x1="493.03" y1="12.3" x2="493.03" y2="16" stroke="#4d4d4d" stroke-width="1.25"/><line x1="497.73" y1="10.7" x2="497.73" y2="16" stroke="#4d4d4d" stroke-width="1.25"/><line x1="502.42" y1="12.3" x2="502.42" y2="16" stroke="#4d4d4d" stroke-width="1.25"/><line x1="507.12" y1="12.3" x2="507.12" y2="16" stroke="#4d4d4d" stroke-width="1.25"/><line x1="511.81" y1="12.3" x2="511.81" y2="16" stroke="#4d4d4d" stroke-width="1.25"/><line x1="516.50" y1="12.3" x2="516.50" y2="16" stroke="#4d4d4d" stroke-width="1.25"/><line x1="521.20" y1="2" x2="521.20" y2="16" stroke="#4a4a4a" stroke-width="1.4"/><text x="522.80" y="9.3" font-size="7.6" fill="#3a3a3a" font-family="Liberation Sans">210</text><line x1="525.90" y1="12.3" x2="525.90" y2="16" stroke="#4d4d4d" stroke-width="1.25"/><line x1="530.59" y1="12.3" x2="530.59" y2="16" stroke="#4d4d4d" stroke-width="1.25"/><line x1="535.29" y1="12.3" x2="535.29" y2="16" stroke="#4d4d4d" stroke-width="1.25"/><line x1="539.98" y1="12.3" x2="539.98" y2="16" stroke="#4d4d4d" stroke-width="1.25"/><line x1="544.68" y1="10.7" x2="544.68" y2="16" stroke="#4d4d4d" stroke-width="1.25"/><line x1="549.37" y1="12.3" x2="549.37" y2="16" stroke="#4d4d4d" stroke-width="1.25"/><line x1="554.07" y1="12.3" x2="554.07" y2="16" stroke="#4d4d4d" stroke-width="1.25"/><line x1="558.76" y1="12.3" x2="558.76" y2="16" stroke="#4d4d4d" stroke-width="1.25"/><line x1="563.46" y1="12.3" x2="563.46" y2="16" stroke="#4d4d4d" stroke-width="1.25"/><line x1="568.15" y1="2" x2="568.15" y2="16" stroke="#4a4a4a" stroke-width="1.4"/><text x="569.75" y="9.3" font-size="7.6" fill="#3a3a3a" font-family="Liberation Sans">220</text><line x1="572.85" y1="12.3" x2="572.85" y2="16" stroke="#4d4d4d" stroke-width="1.25"/><line x1="577.54" y1="12.3" x2="577.54" y2="16" stroke="#4d4d4d" stroke-width="1.25"/><line x1="582.24" y1="12.3" x2="582.24" y2="16" stroke="#4d4d4d" stroke-width="1.25"/><line x1="586.93" y1="12.3" x2="586.93" y2="16" stroke="#4d4d4d" stroke-width="1.25"/><line x1="591.63" y1="10.7" x2="591.63" y2="16" stroke="#4d4d4d" stroke-width="1.25"/><line x1="596.32" y1="12.3" x2="596.32" y2="16" stroke="#4d4d4d" stroke-width="1.25"/><line x1="601.02" y1="12.3" x2="601.02" y2="16" stroke="#4d4d4d" stroke-width="1.25"/><line x1="605.71" y1="12.3" x2="605.71" y2="16" stroke="#4d4d4d" stroke-width="1.25"/><line x1="610.41" y1="12.3" x2="610.41" y2="16" stroke="#4d4d4d" stroke-width="1.25"/><line x1="615.10" y1="2" x2="615.10" y2="16" stroke="#4a4a4a" stroke-width="1.4"/><text x="616.70" y="9.3" font-size="7.6" fill="#3a3a3a" font-family="Liberation Sans">230</text><line x1="619.80" y1="12.3" x2="619.80" y2="16" stroke="#4d4d4d" stroke-width="1.25"/><line x1="624.49" y1="12.3" x2="624.49" y2="16" stroke="#4d4d4d" stroke-width="1.25"/><line x1="629.19" y1="12.3" x2="629.19" y2="16" stroke="#4d4d4d" stroke-width="1.25"/><line x1="633.88" y1="12.3" x2="633.88" y2="16" stroke="#4d4d4d" stroke-width="1.25"/><line x1="638.58" y1="10.7" x2="638.58" y2="16" stroke="#4d4d4d" stroke-width="1.25"/><line x1="643.27" y1="12.3" x2="643.27" y2="16" stroke="#4d4d4d" stroke-width="1.25"/><line x1="647.97" y1="12.3" x2="647.97" y2="16" stroke="#4d4d4d" stroke-width="1.25"/><line x1="652.66" y1="12.3" x2="652.66" y2="16" stroke="#4d4d4d" stroke-width="1.25"/><line x1="657.36" y1="12.3" x2="657.36" y2="16" stroke="#4d4d4d" stroke-width="1.25"/><line x1="662.05" y1="2" x2="662.05" y2="16" stroke="#4a4a4a" stroke-width="1.4"/><text x="663.65" y="9.3" font-size="7.6" fill="#3a3a3a" font-family="Liberation Sans">240</text><line x1="666.75" y1="12.3" x2="666.75" y2="16" stroke="#4d4d4d" stroke-width="1.25"/><line x1="671.44" y1="12.3" x2="671.44" y2="16" stroke="#4d4d4d" stroke-width="1.25"/><line x1="676.14" y1="12.3" x2="676.14" y2="16" stroke="#4d4d4d" stroke-width="1.25"/><line x1="680.83" y1="12.3" x2="680.83" y2="16" stroke="#4d4d4d" stroke-width="1.25"/><line x1="685.53" y1="10.7" x2="685.53" y2="16" stroke="#4d4d4d" stroke-width="1.25"/><line x1="690.22" y1="12.3" x2="690.22" y2="16" stroke="#4d4d4d" stroke-width="1.25"/><line x1="694.92" y1="12.3" x2="694.92" y2="16" stroke="#4d4d4d" stroke-width="1.25"/><line x1="699.61" y1="12.3" x2="699.61" y2="16" stroke="#4d4d4d" stroke-width="1.25"/><line x1="704.31" y1="12.3" x2="704.31" y2="16" stroke="#4d4d4d" stroke-width="1.25"/><line x1="709.00" y1="2" x2="709.00" y2="16" stroke="#4a4a4a" stroke-width="1.4"/><text x="710.60" y="9.3" font-size="7.6" fill="#3a3a3a" font-family="Liberation Sans">250</text><line x1="713.70" y1="12.3" x2="713.70" y2="16" stroke="#4d4d4d" stroke-width="1.25"/><line x1="718.39" y1="12.3" x2="718.39" y2="16" stroke="#4d4d4d" stroke-width="1.25"/><line x1="723.09" y1="12.3" x2="723.09" y2="16" stroke="#4d4d4d" stroke-width="1.25"/><line x1="727.78" y1="12.3" x2="727.78" y2="16" stroke="#4d4d4d" stroke-width="1.25"/><line x1="732.48" y1="10.7" x2="732.48" y2="16" stroke="#4d4d4d" stroke-width="1.25"/><line x1="737.17" y1="12.3" x2="737.17" y2="16" stroke="#4d4d4d" stroke-width="1.25"/><line x1="741.87" y1="12.3" x2="741.87" y2="16" stroke="#4d4d4d" stroke-width="1.25"/><line x1="746.56" y1="12.3" x2="746.56" y2="16" stroke="#4d4d4d" stroke-width="1.25"/><line x1="751.26" y1="12.3" x2="751.26" y2="16" stroke="#4d4d4d" stroke-width="1.25"/><line x1="755.95" y1="2" x2="755.95" y2="16" stroke="#4a4a4a" stroke-width="1.4"/><text x="757.55" y="9.3" font-size="7.6" fill="#3a3a3a" font-family="Liberation Sans">260</text><line x1="760.65" y1="12.3" x2="760.65" y2="16" stroke="#4d4d4d" stroke-width="1.25"/><line x1="765.34" y1="12.3" x2="765.34" y2="16" stroke="#4d4d4d" stroke-width="1.25"/><line x1="770.04" y1="12.3" x2="770.04" y2="16" stroke="#4d4d4d" stroke-width="1.25"/><line x1="774.73" y1="12.3" x2="774.73" y2="16" stroke="#4d4d4d" stroke-width="1.25"/><line x1="779.43" y1="10.7" x2="779.43" y2="16" stroke="#4d4d4d" stroke-width="1.25"/><line x1="535.7" y1="2" x2="535.7" y2="16" stroke="#b8352f" stroke-width="1.3"/></svg></div>
<div id="rulerv" class="a"><svg class="a" style="left:0;top:0" width="14" height="623"><line x1="11" y1="3.23" x2="14" y2="3.23" stroke="#4d4d4d" stroke-width="1.25"/><line x1="11" y1="7.91" x2="14" y2="7.91" stroke="#4d4d4d" stroke-width="1.25"/><line x1="1" y1="12.60" x2="14" y2="12.60" stroke="#4a4a4a" stroke-width="1.4"/><text transform="translate(7.6,15.60) rotate(-90)" text-anchor="end" font-size="7.6" fill="#3a3a3a" font-family="Liberation Sans">0</text><line x1="11" y1="17.28" x2="14" y2="17.28" stroke="#4d4d4d" stroke-width="1.25"/><line x1="11" y1="21.97" x2="14" y2="21.97" stroke="#4d4d4d" stroke-width="1.25"/><line x1="11" y1="26.66" x2="14" y2="26.66" stroke="#4d4d4d" stroke-width="1.25"/><line x1="11" y1="31.34" x2="14" y2="31.34" stroke="#4d4d4d" stroke-width="1.25"/><line x1="9" y1="36.02" x2="14" y2="36.02" stroke="#4d4d4d" stroke-width="1.25"/><line x1="11" y1="40.71" x2="14" y2="40.71" stroke="#4d4d4d" stroke-width="1.25"/><line x1="11" y1="45.39" x2="14" y2="45.39" stroke="#4d4d4d" stroke-width="1.25"/><line x1="11" y1="50.08" x2="14" y2="50.08" stroke="#4d4d4d" stroke-width="1.25"/><line x1="11" y1="54.76" x2="14" y2="54.76" stroke="#4d4d4d" stroke-width="1.25"/><line x1="1" y1="59.45" x2="14" y2="59.45" stroke="#4a4a4a" stroke-width="1.4"/><text transform="translate(7.6,62.45) rotate(-90)" text-anchor="end" font-size="7.6" fill="#3a3a3a" font-family="Liberation Sans">10</text><line x1="11" y1="64.13" x2="14" y2="64.13" stroke="#4d4d4d" stroke-width="1.25"/><line x1="11" y1="68.82" x2="14" y2="68.82" stroke="#4d4d4d" stroke-width="1.25"/><line x1="11" y1="73.50" x2="14" y2="73.50" stroke="#4d4d4d" stroke-width="1.25"/><line x1="11" y1="78.19" x2="14" y2="78.19" stroke="#4d4d4d" stroke-width="1.25"/><line x1="9" y1="82.88" x2="14" y2="82.88" stroke="#4d4d4d" stroke-width="1.25"/><line x1="11" y1="87.56" x2="14" y2="87.56" stroke="#4d4d4d" stroke-width="1.25"/><line x1="11" y1="92.25" x2="14" y2="92.25" stroke="#4d4d4d" stroke-width="1.25"/><line x1="11" y1="96.93" x2="14" y2="96.93" stroke="#4d4d4d" stroke-width="1.25"/><line x1="11" y1="101.61" x2="14" y2="101.61" stroke="#4d4d4d" stroke-width="1.25"/><line x1="1" y1="106.30" x2="14" y2="106.30" stroke="#4a4a4a" stroke-width="1.4"/><text transform="translate(7.6,109.30) rotate(-90)" text-anchor="end" font-size="7.6" fill="#3a3a3a" font-family="Liberation Sans">20</text><line x1="11" y1="110.98" x2="14" y2="110.98" stroke="#4d4d4d" stroke-width="1.25"/><line x1="11" y1="115.67" x2="14" y2="115.67" stroke="#4d4d4d" stroke-width="1.25"/><line x1="11" y1="120.35" x2="14" y2="120.35" stroke="#4d4d4d" stroke-width="1.25"/><line x1="11" y1="125.04" x2="14" y2="125.04" stroke="#4d4d4d" stroke-width="1.25"/><line x1="9" y1="129.72" x2="14" y2="129.72" stroke="#4d4d4d" stroke-width="1.25"/><line x1="11" y1="134.41" x2="14" y2="134.41" stroke="#4d4d4d" stroke-width="1.25"/><line x1="11" y1="139.09" x2="14" y2="139.09" stroke="#4d4d4d" stroke-width="1.25"/><line x1="11" y1="143.78" x2="14" y2="143.78" stroke="#4d4d4d" stroke-width="1.25"/><line x1="11" y1="148.46" x2="14" y2="148.46" stroke="#4d4d4d" stroke-width="1.25"/><line x1="1" y1="153.15" x2="14" y2="153.15" stroke="#4a4a4a" stroke-width="1.4"/><text transform="translate(7.6,156.15) rotate(-90)" text-anchor="end" font-size="7.6" fill="#3a3a3a" font-family="Liberation Sans">30</text><line x1="11" y1="157.83" x2="14" y2="157.83" stroke="#4d4d4d" stroke-width="1.25"/><line x1="11" y1="162.52" x2="14" y2="162.52" stroke="#4d4d4d" stroke-width="1.25"/><line x1="11" y1="167.20" x2="14" y2="167.20" stroke="#4d4d4d" stroke-width="1.25"/><line x1="11" y1="171.89" x2="14" y2="171.89" stroke="#4d4d4d" stroke-width="1.25"/><line x1="9" y1="176.57" x2="14" y2="176.57" stroke="#4d4d4d" stroke-width="1.25"/><line x1="11" y1="181.26" x2="14" y2="181.26" stroke="#4d4d4d" stroke-width="1.25"/><line x1="11" y1="185.94" x2="14" y2="185.94" stroke="#4d4d4d" stroke-width="1.25"/><line x1="11" y1="190.63" x2="14" y2="190.63" stroke="#4d4d4d" stroke-width="1.25"/><line x1="11" y1="195.31" x2="14" y2="195.31" stroke="#4d4d4d" stroke-width="1.25"/><line x1="1" y1="200.00" x2="14" y2="200.00" stroke="#4a4a4a" stroke-width="1.4"/><text transform="translate(7.6,203.00) rotate(-90)" text-anchor="end" font-size="7.6" fill="#3a3a3a" font-family="Liberation Sans">40</text><line x1="11" y1="204.68" x2="14" y2="204.68" stroke="#4d4d4d" stroke-width="1.25"/><line x1="11" y1="209.37" x2="14" y2="209.37" stroke="#4d4d4d" stroke-width="1.25"/><line x1="11" y1="214.05" x2="14" y2="214.05" stroke="#4d4d4d" stroke-width="1.25"/><line x1="11" y1="218.74" x2="14" y2="218.74" stroke="#4d4d4d" stroke-width="1.25"/><line x1="9" y1="223.42" x2="14" y2="223.42" stroke="#4d4d4d" stroke-width="1.25"/><line x1="11" y1="228.11" x2="14" y2="228.11" stroke="#4d4d4d" stroke-width="1.25"/><line x1="11" y1="232.79" x2="14" y2="232.79" stroke="#4d4d4d" stroke-width="1.25"/><line x1="11" y1="237.48" x2="14" y2="237.48" stroke="#4d4d4d" stroke-width="1.25"/><line x1="11" y1="242.16" x2="14" y2="242.16" stroke="#4d4d4d" stroke-width="1.25"/><line x1="1" y1="246.85" x2="14" y2="246.85" stroke="#4a4a4a" stroke-width="1.4"/><text transform="translate(7.6,249.85) rotate(-90)" text-anchor="end" font-size="7.6" fill="#3a3a3a" font-family="Liberation Sans">50</text><line x1="11" y1="251.53" x2="14" y2="251.53" stroke="#4d4d4d" stroke-width="1.25"/><line x1="11" y1="256.22" x2="14" y2="256.22" stroke="#4d4d4d" stroke-width="1.25"/><line x1="11" y1="260.90" x2="14" y2="260.90" stroke="#4d4d4d" stroke-width="1.25"/><line x1="11" y1="265.59" x2="14" y2="265.59" stroke="#4d4d4d" stroke-width="1.25"/><line x1="9" y1="270.27" x2="14" y2="270.27" stroke="#4d4d4d" stroke-width="1.25"/><line x1="11" y1="274.96" x2="14" y2="274.96" stroke="#4d4d4d" stroke-width="1.25"/><line x1="11" y1="279.64" x2="14" y2="279.64" stroke="#4d4d4d" stroke-width="1.25"/><line x1="11" y1="284.33" x2="14" y2="284.33" stroke="#4d4d4d" stroke-width="1.25"/><line x1="11" y1="289.01" x2="14" y2="289.01" stroke="#4d4d4d" stroke-width="1.25"/><line x1="1" y1="293.70" x2="14" y2="293.70" stroke="#4a4a4a" stroke-width="1.4"/><text transform="translate(7.6,296.70) rotate(-90)" text-anchor="end" font-size="7.6" fill="#3a3a3a" font-family="Liberation Sans">60</text><line x1="11" y1="298.38" x2="14" y2="298.38" stroke="#4d4d4d" stroke-width="1.25"/><line x1="11" y1="303.07" x2="14" y2="303.07" stroke="#4d4d4d" stroke-width="1.25"/><line x1="11" y1="307.75" x2="14" y2="307.75" stroke="#4d4d4d" stroke-width="1.25"/><line x1="11" y1="312.44" x2="14" y2="312.44" stroke="#4d4d4d" stroke-width="1.25"/><line x1="9" y1="317.12" x2="14" y2="317.12" stroke="#4d4d4d" stroke-width="1.25"/><line x1="11" y1="321.81" x2="14" y2="321.81" stroke="#4d4d4d" stroke-width="1.25"/><line x1="11" y1="326.50" x2="14" y2="326.50" stroke="#4d4d4d" stroke-width="1.25"/><line x1="11" y1="331.18" x2="14" y2="331.18" stroke="#4d4d4d" stroke-width="1.25"/><line x1="11" y1="335.87" x2="14" y2="335.87" stroke="#4d4d4d" stroke-width="1.25"/><line x1="1" y1="340.55" x2="14" y2="340.55" stroke="#4a4a4a" stroke-width="1.4"/><text transform="translate(7.6,343.55) rotate(-90)" text-anchor="end" font-size="7.6" fill="#3a3a3a" font-family="Liberation Sans">70</text><line x1="11" y1="345.24" x2="14" y2="345.24" stroke="#4d4d4d" stroke-width="1.25"/><line x1="11" y1="349.92" x2="14" y2="349.92" stroke="#4d4d4d" stroke-width="1.25"/><line x1="11" y1="354.61" x2="14" y2="354.61" stroke="#4d4d4d" stroke-width="1.25"/><line x1="11" y1="359.29" x2="14" y2="359.29" stroke="#4d4d4d" stroke-width="1.25"/><line x1="9" y1="363.97" x2="14" y2="363.97" stroke="#4d4d4d" stroke-width="1.25"/><line x1="11" y1="368.66" x2="14" y2="368.66" stroke="#4d4d4d" stroke-width="1.25"/><line x1="11" y1="373.34" x2="14" y2="373.34" stroke="#4d4d4d" stroke-width="1.25"/><line x1="11" y1="378.03" x2="14" y2="378.03" stroke="#4d4d4d" stroke-width="1.25"/><line x1="11" y1="382.71" x2="14" y2="382.71" stroke="#4d4d4d" stroke-width="1.25"/><line x1="1" y1="387.40" x2="14" y2="387.40" stroke="#4a4a4a" stroke-width="1.4"/><text transform="translate(7.6,390.40) rotate(-90)" text-anchor="end" font-size="7.6" fill="#3a3a3a" font-family="Liberation Sans">80</text><line x1="11" y1="392.08" x2="14" y2="392.08" stroke="#4d4d4d" stroke-width="1.25"/><line x1="11" y1="396.77" x2="14" y2="396.77" stroke="#4d4d4d" stroke-width="1.25"/><line x1="11" y1="401.45" x2="14" y2="401.45" stroke="#4d4d4d" stroke-width="1.25"/><line x1="11" y1="406.14" x2="14" y2="406.14" stroke="#4d4d4d" stroke-width="1.25"/><line x1="9" y1="410.82" x2="14" y2="410.82" stroke="#4d4d4d" stroke-width="1.25"/><line x1="11" y1="415.51" x2="14" y2="415.51" stroke="#4d4d4d" stroke-width="1.25"/><line x1="11" y1="420.19" x2="14" y2="420.19" stroke="#4d4d4d" stroke-width="1.25"/><line x1="11" y1="424.88" x2="14" y2="424.88" stroke="#4d4d4d" stroke-width="1.25"/><line x1="11" y1="429.56" x2="14" y2="429.56" stroke="#4d4d4d" stroke-width="1.25"/><line x1="1" y1="434.25" x2="14" y2="434.25" stroke="#4a4a4a" stroke-width="1.4"/><text transform="translate(7.6,437.25) rotate(-90)" text-anchor="end" font-size="7.6" fill="#3a3a3a" font-family="Liberation Sans">90</text><line x1="11" y1="438.93" x2="14" y2="438.93" stroke="#4d4d4d" stroke-width="1.25"/><line x1="11" y1="443.62" x2="14" y2="443.62" stroke="#4d4d4d" stroke-width="1.25"/><line x1="11" y1="448.30" x2="14" y2="448.30" stroke="#4d4d4d" stroke-width="1.25"/><line x1="11" y1="452.99" x2="14" y2="452.99" stroke="#4d4d4d" stroke-width="1.25"/><line x1="9" y1="457.67" x2="14" y2="457.67" stroke="#4d4d4d" stroke-width="1.25"/><line x1="11" y1="462.36" x2="14" y2="462.36" stroke="#4d4d4d" stroke-width="1.25"/><line x1="11" y1="467.04" x2="14" y2="467.04" stroke="#4d4d4d" stroke-width="1.25"/><line x1="11" y1="471.73" x2="14" y2="471.73" stroke="#4d4d4d" stroke-width="1.25"/><line x1="11" y1="476.41" x2="14" y2="476.41" stroke="#4d4d4d" stroke-width="1.25"/><line x1="1" y1="481.10" x2="14" y2="481.10" stroke="#4a4a4a" stroke-width="1.4"/><text transform="translate(7.6,484.10) rotate(-90)" text-anchor="end" font-size="7.6" fill="#3a3a3a" font-family="Liberation Sans">100</text><line x1="11" y1="485.78" x2="14" y2="485.78" stroke="#4d4d4d" stroke-width="1.25"/><line x1="11" y1="490.47" x2="14" y2="490.47" stroke="#4d4d4d" stroke-width="1.25"/><line x1="11" y1="495.15" x2="14" y2="495.15" stroke="#4d4d4d" stroke-width="1.25"/><line x1="11" y1="499.84" x2="14" y2="499.84" stroke="#4d4d4d" stroke-width="1.25"/><line x1="9" y1="504.52" x2="14" y2="504.52" stroke="#4d4d4d" stroke-width="1.25"/><line x1="11" y1="509.21" x2="14" y2="509.21" stroke="#4d4d4d" stroke-width="1.25"/><line x1="11" y1="513.89" x2="14" y2="513.89" stroke="#4d4d4d" stroke-width="1.25"/><line x1="11" y1="518.58" x2="14" y2="518.58" stroke="#4d4d4d" stroke-width="1.25"/><line x1="11" y1="523.26" x2="14" y2="523.26" stroke="#4d4d4d" stroke-width="1.25"/><line x1="1" y1="527.95" x2="14" y2="527.95" stroke="#4a4a4a" stroke-width="1.4"/><text transform="translate(7.6,530.95) rotate(-90)" text-anchor="end" font-size="7.6" fill="#3a3a3a" font-family="Liberation Sans">110</text><line x1="11" y1="532.63" x2="14" y2="532.63" stroke="#4d4d4d" stroke-width="1.25"/><line x1="11" y1="537.32" x2="14" y2="537.32" stroke="#4d4d4d" stroke-width="1.25"/><line x1="11" y1="542.00" x2="14" y2="542.00" stroke="#4d4d4d" stroke-width="1.25"/><line x1="11" y1="546.69" x2="14" y2="546.69" stroke="#4d4d4d" stroke-width="1.25"/><line x1="9" y1="551.38" x2="14" y2="551.38" stroke="#4d4d4d" stroke-width="1.25"/><line x1="11" y1="556.06" x2="14" y2="556.06" stroke="#4d4d4d" stroke-width="1.25"/><line x1="11" y1="560.75" x2="14" y2="560.75" stroke="#4d4d4d" stroke-width="1.25"/><line x1="11" y1="565.43" x2="14" y2="565.43" stroke="#4d4d4d" stroke-width="1.25"/><line x1="11" y1="570.12" x2="14" y2="570.12" stroke="#4d4d4d" stroke-width="1.25"/><line x1="1" y1="574.80" x2="14" y2="574.80" stroke="#4a4a4a" stroke-width="1.4"/><text transform="translate(7.6,577.80) rotate(-90)" text-anchor="end" font-size="7.6" fill="#3a3a3a" font-family="Liberation Sans">120</text><line x1="11" y1="579.49" x2="14" y2="579.49" stroke="#4d4d4d" stroke-width="1.25"/><line x1="11" y1="584.17" x2="14" y2="584.17" stroke="#4d4d4d" stroke-width="1.25"/><line x1="11" y1="588.86" x2="14" y2="588.86" stroke="#4d4d4d" stroke-width="1.25"/><line x1="11" y1="593.54" x2="14" y2="593.54" stroke="#4d4d4d" stroke-width="1.25"/><line x1="9" y1="598.23" x2="14" y2="598.23" stroke="#4d4d4d" stroke-width="1.25"/><line x1="11" y1="602.91" x2="14" y2="602.91" stroke="#4d4d4d" stroke-width="1.25"/><line x1="11" y1="607.60" x2="14" y2="607.60" stroke="#4d4d4d" stroke-width="1.25"/><line x1="11" y1="612.28" x2="14" y2="612.28" stroke="#4d4d4d" stroke-width="1.25"/><line x1="11" y1="616.96" x2="14" y2="616.96" stroke="#4d4d4d" stroke-width="1.25"/><line x1="0.5" y1="315.4" x2="14" y2="315.4" stroke="#b8352f" stroke-width="1.3"/></svg></div>

<!-- canvas -->
<div id="canvas" class="a">
  <div id="page" class="a"></div>
  <svg class="a" style="left:0;top:0" width="757" height="610"><g transform="translate(-49,-103)"><path d="M147.8 530.1 L147.8 492.1 L145.2 485.2 L149.5 464.5 L153.8 430.0 L155.3 419.6 L157.3 409.6 L159.3 401.0 L161.2 387.7 L164.6 377.1 L167.2 369.8 L170.5 344.6 L173.9 337.3" fill="none" stroke="#1a1a1a" stroke-width="2.2" stroke-dasharray="24.7 8.0" stroke-dashoffset="32.30" stroke-linejoin="round"/><path d="M173.9 337.3 L179.8 331.7 L187.8 333.3 L192.5 340.6 L197.8 347.0 L215.0 363.8 L231.6 378.4 L239.0 386.4 L255.1 413.2 L274.9 449.9 L290.9 478.8 L305.8 500.7 L307.8 507.7 L309.6 520.0 L313.9 524.6" fill="none" stroke="#1a1a1a" stroke-width="2.2" stroke-dasharray="24.7 8.0" stroke-dashoffset="0.00" stroke-linejoin="round"/><path d="M313.9 524.6 L319.9 532.6 L438.6 678.6 L448.6 715.0" fill="none" stroke="#1a1a1a" stroke-width="2.2" stroke-dasharray="24.7 8.0" stroke-dashoffset="22.70" stroke-linejoin="round"/><path d="M49.5 378.0 L58.3 402.4 L68.7 423.9 L69.5 432.7 L71.1 457.4 L68.7 463.7 L67.1 474.9 L65.5 494.0 L60.7 508.3 L55.9 516.0 L49.6 519.0" fill="none" stroke="#1a1a1a" stroke-width="2.2" stroke-dasharray="24.7 8.0" stroke-dashoffset="6.74" stroke-linejoin="round"/><path d="M222.0 670.0 L224.9 683.0 L229.0 706.2 L231.0 715.0" fill="none" stroke="#1a1a1a" stroke-width="2.2" stroke-dasharray="24.7 8.0" stroke-dashoffset="19.38" stroke-linejoin="round"/><path d="M53.5 452.6 L59.1 455.0 L65.5 460.5 L68.7 463.7" fill="none" stroke="#1a1a1a" stroke-width="2.1" stroke-linejoin="round" stroke-linecap="butt"/><path d="M55.9 516.0 L62.3 531.9" fill="none" stroke="#1a1a1a" stroke-width="2.1" stroke-linejoin="round" stroke-linecap="butt"/><path d="M67.5 539.8 L87.0 543.5 L90.0 547.0" fill="none" stroke="#1a1a1a" stroke-width="2.1" stroke-linejoin="round" stroke-linecap="butt"/><path d="M96.0 543.5 L105.8 543.5" fill="none" stroke="#1a1a1a" stroke-width="2.1" stroke-linejoin="round" stroke-linecap="butt"/><path d="M114.0 543.5 L137.2 542.5" fill="none" stroke="#1a1a1a" stroke-width="2.1" stroke-linejoin="round" stroke-linecap="butt"/><path d="M89.3 545.8 L90.0 563.0" fill="none" stroke="#1a1a1a" stroke-width="2.1" stroke-linejoin="round" stroke-linecap="butt"/><path d="M106.5 552.6 L105.3 579.7 L103.7 603.6 L104.1 629.0 L114.8 635.1 L111.8 662.6 L122.4 669.5" fill="none" stroke="#1a1a1a" stroke-width="2.1" stroke-linejoin="round" stroke-linecap="butt"/><path d="M146.5 539.5 L159.3 550.5" fill="none" stroke="#1a1a1a" stroke-width="2.1" stroke-linejoin="round" stroke-linecap="butt"/><path d="M165.6 550.5 L201.4 550.5 L216.0 549.5 L222.4 556.8 L235.0 554.8" fill="none" stroke="#1a1a1a" stroke-width="2.1" stroke-linejoin="round" stroke-linecap="butt"/><path d="M245.6 552.8 L253.6 567.4" fill="none" stroke="#1a1a1a" stroke-width="2.1" stroke-linejoin="round" stroke-linecap="butt"/><path d="M261.6 566.0 L274.8 565.4 L284.4 545.8 L299.0 530.5 L313.9 524.6" fill="none" stroke="#1a1a1a" stroke-width="2.1" stroke-linejoin="round" stroke-linecap="butt"/><path d="M274.8 565.4 L324.5 614.9 L316.2 628.2 L286.3 647.3 L266.4 661.4 L248.1 664.7 L223.2 673.9" fill="none" stroke="#1a1a1a" stroke-width="2.1" stroke-linejoin="round" stroke-linecap="butt"/><path d="M180.7 607.4 L197.4 606.7 L196.7 600.1" fill="none" stroke="#1a1a1a" stroke-width="2.1" stroke-linejoin="round" stroke-linecap="butt"/><path d="M201.2 595.0 L221.5 593.6 L237.6 598.0" fill="none" stroke="#1a1a1a" stroke-width="2.1" stroke-linejoin="round" stroke-linecap="butt"/><path d="M221.5 592.8 L222.3 603.8" fill="none" stroke="#1a1a1a" stroke-width="2.1" stroke-linejoin="round" stroke-linecap="butt"/><path d="M223.7 614.0 L225.9 625.7 L229.6 631.5 L236.1 649.0" fill="none" stroke="#1a1a1a" stroke-width="2.1" stroke-linejoin="round" stroke-linecap="butt"/><path d="M107.2 674.8 L122.4 676.3 L198.8 652.7 L212.0 650.0" fill="none" stroke="#1a1a1a" stroke-width="2.1" stroke-linejoin="round" stroke-linecap="butt"/><path d="M111.8 676.0 L111.0 685.5" fill="none" stroke="#1a1a1a" stroke-width="2.1" stroke-linejoin="round" stroke-linecap="butt"/><path d="M47.6 627.5 L51.5 630.0 L49.0 633.0 L52.2 638.2" fill="none" stroke="#1a1a1a" stroke-width="2.1" stroke-linejoin="round" stroke-linecap="butt"/><path d="M49.2 709.2 L56.8 713.0" fill="none" stroke="#1a1a1a" stroke-width="2.1" stroke-linejoin="round" stroke-linecap="butt"/><path d="M308.2 506.0 L309.6 520.0 L313.3 522.6" fill="none" stroke="#1a1a1a" stroke-width="2.1" stroke-linejoin="round" stroke-linecap="butt"/><path d="M49.6 427.9 L52.7 441.4 L51.2 463.7 L52.7 495.6 L52.0 503.2 L62.3 517.5 L65.5 527.1 L78.2 533.5 L92.6 543.8 L99.0 555.5" fill="none" stroke="#34b3d3" stroke-width="4.9" stroke-linejoin="round"/><path d="M52.0 503.2 L49.5 512.0" fill="none" stroke="#34b3d3" stroke-width="4.9" stroke-linejoin="round"/><path d="M49.2 650.4 L58.3 665.6 L76.6 688.5 L88.0 698.0" fill="none" stroke="#34b3d3" stroke-width="4.9" stroke-linejoin="round"/><path d="M53.0 699.2 L70.5 691.6 L88.9 679.4 L105.6 675.6" fill="none" stroke="#34b3d3" stroke-width="4.9" stroke-linejoin="round"/><path d="M54.0 568.3 L99.0 568.3 L106.5 561.5 L110.3 558.5 L116.3 554.8 L129.8 554.0 L132.4 556.6 L135.6 562.9 L156.3 567.7" fill="none" stroke="#34b3d3" stroke-width="4.6" stroke-dasharray="24.3 5.4" stroke-dashoffset="0.00" stroke-linejoin="round"/><path d="M155.3 565.4 L159.0 554.0 L165.0 549.0 L170.0 548.0 L197.8 549.5 L216.0 548.5" fill="none" stroke="#34b3d3" stroke-width="4.6" stroke-dasharray="24.3 5.4" stroke-dashoffset="28.60" stroke-linejoin="round"/><path d="M216.0 548.5 L224.0 557.0 L235.0 552.8 L243.0 550.0 L248.3 543.5 L251.0 539.5 L254.9 533.6 L270.8 516.3" fill="none" stroke="#34b3d3" stroke-width="4.6" stroke-dasharray="24.3 5.4" stroke-dashoffset="7.19" stroke-linejoin="round"/><path d="M245.6 547.5 L252.9 548.8 L255.6 563.4 L253.6 568.7 L240.3 590.0 L239.0 595.3 L236.3 600.6" fill="none" stroke="#34b3d3" stroke-width="4.6" stroke-dasharray="24.3 5.4" stroke-dashoffset="1.77" stroke-linejoin="round"/><path d="M155.8 568.0 L168.2 598.0 L172.6 604.5 L178.5 608.2 L180.7 617.0 L181.4 619.9 L185.0 646.1 L185.0 651.2 L185.8 657.0" fill="none" stroke="#34b3d3" stroke-width="4.6" stroke-dasharray="24.3 5.4" stroke-dashoffset="0.07" stroke-linejoin="round"/><path d="M90.4 678.6 L107.9 674.8 L137.7 669.5 L166.7 662.6 L185.0 658.8 L192.7 658.8 L200.0 661.0" fill="none" stroke="#34b3d3" stroke-width="4.6" stroke-dasharray="24.3 5.4" stroke-dashoffset="7.12" stroke-linejoin="round"/><path d="M198.5 511.6 L201.1 533.6 L203.1 563.4 L206.4 593.3" fill="none" stroke="#34b3d3" stroke-width="4.6" stroke-dasharray="24.3 5.4" stroke-dashoffset="0.00" stroke-linejoin="round"/><text transform="translate(58.3,568) rotate(-15) " font-size="15.3" font-family="Liberation Sans" fill="#1f1f1f" letter-spacing="0.4">camp line</text><text transform="translate(202,489) rotate(86)" font-size="14.2" font-family="Liberation Sans" fill="#1f1f1f" letter-spacing="0.9">Borehole to house</text><circle cx="216.5" cy="468.3" r="20" fill="#c1d24d"/><text x="216.50" y="476.50" text-anchor="middle" font-size="18.8" font-family="Liberation Sans" fill="#0d0d0d" stroke="#0d0d0d" stroke-width="0.8">9</text><circle cx="140.2" cy="609.6" r="20" fill="#c1d24d"/><path d="M136.12 617.80 V604.90 M136.72 605.30 L131.84 608.90" fill="none" stroke="#0d0d0d" stroke-width="2.4" stroke-linejoin="miter"/><path d="M146.32 617.80 V604.90 M146.92 605.30 L142.04 608.90" fill="none" stroke="#0d0d0d" stroke-width="2.4" stroke-linejoin="miter"/><circle cx="267.2" cy="617.3" r="20" fill="#c1d24d"/><text x="267.20" y="625.50" text-anchor="middle" font-size="18.8" font-family="Liberation Sans" fill="#0d0d0d" stroke="#0d0d0d" stroke-width="0.8">5</text><circle cx="216.6" cy="653.1" r="20" fill="#c1d24d"/><text x="216.60" y="661.30" text-anchor="middle" font-size="18.8" font-family="Liberation Sans" fill="#0d0d0d" stroke="#0d0d0d" stroke-width="0.8">3</text><circle cx="96.5" cy="698.5" r="20" fill="#c1d24d"/><text x="96.50" y="706.70" text-anchor="middle" font-size="18.8" font-family="Liberation Sans" fill="#0d0d0d" stroke="#0d0d0d" stroke-width="0.8">6</text><circle cx="339.1" cy="707.1" r="20" fill="#c1d24d"/><path d="M335.02 715.30 V702.40 M335.62 702.80 L330.74 706.40" fill="none" stroke="#0d0d0d" stroke-width="2.4" stroke-linejoin="miter"/><text x="344.20" y="715.30" text-anchor="middle" font-size="18.8" font-family="Liberation Sans" fill="#0d0d0d" stroke="#0d0d0d" stroke-width="0.8">0</text><circle cx="36" cy="484" r="20" fill="#c1d24d"/></g></svg><svg class="a" style="left:0;top:0" width="757" height="610"><g transform="translate(-49,-103)"><rect x="500.5" y="159.5" width="167" height="142" fill="#fff" stroke="#8a86b0" stroke-width="0.9" stroke-dasharray="1.5 1.5"/><text x="510" y="200.2" font-size="16.4" font-family="Liberation Sans" fill="#111">Water Lines</text><text x="509.5" y="228.7" font-size="18.3" font-family="Liberation Sans" fill="#111">River</text><text x="509.5" y="258.8" font-size="18.3" font-family="Liberation Sans" fill="#111" letter-spacing="0.15">Irrigation line</text><text x="509.5" y="288.5" font-size="18.3" font-family="Liberation Sans" fill="#111" letter-spacing="0.95">Camps [20]</text><rect x="622.5" y="219.3" width="37.5" height="4.7" fill="#34b3d3"/><rect x="622.5" y="249.8" width="24.7" height="4.9" fill="#34b3d3"/><rect x="652.2" y="249.8" width="8.5" height="4.9" fill="#34b3d3"/><path d="M625 276 V274 H648.7 M625 278 V290.5 H641 M650 290.5 H657 V274" fill="none" stroke="#1a1a1a" stroke-width="1.8"/><path d="M626 282.5 H656" fill="none" stroke="#1a1a1a" stroke-width="1" stroke-dasharray="4 2"/><rect x="500.5" y="159.5" width="9" height="9" fill="none" stroke="#9ec3e6" stroke-width="1"/><rect x="500.5" y="225.7" width="9" height="9" fill="none" stroke="#9ec3e6" stroke-width="1"/><rect x="500.5" y="292.3" width="9" height="9" fill="none" stroke="#9ec3e6" stroke-width="1"/><rect x="579.3" y="159.5" width="9" height="9" fill="none" stroke="#9ec3e6" stroke-width="1"/><rect x="579.3" y="292.3" width="9" height="9" fill="none" stroke="#9ec3e6" stroke-width="1"/><rect x="658.3" y="159.5" width="9" height="9" fill="none" stroke="#9ec3e6" stroke-width="1"/><rect x="658.3" y="225.7" width="9" height="9" fill="none" stroke="#9ec3e6" stroke-width="1"/><rect x="658.3" y="292.3" width="9" height="9" fill="none" stroke="#9ec3e6" stroke-width="1"/></g></svg>
</div>
<div id="vscroll" class="a"><div class="a" style="left:0;top:0;width:12px;height:10.5px;background:#f6f6f6"></div>
<div class="a up" style="left:1.5px;top:3px;border-bottom-color:#3d3d3d"></div>
<div class="a" style="left:0;top:10.5px;width:12px;height:30px;background:#dedede;border-bottom:1px solid #d4d4d4"></div>
<div class="a" style="left:0;top:40.5px;width:12px;height:320px;background:linear-gradient(90deg,#f3f3f3,#fbfbfb)"></div>
<div class="a" style="left:0;top:360px;width:12px;height:239px;background:#dedede;border-top:1px solid #d2d2d2"></div>
<div class="a" style="left:0;top:599px;width:12px;height:11px;background:#f6f6f6;border-top:1px solid #e4e4e4"></div>
<div class="a dn" style="left:1.5px;top:603px;border-top-color:#3d3d3d"></div></div>
<div id="hscroll" class="a"><div class="a" style="left:0;top:0;width:11px;height:12px;background:#f6f6f6;border-right:1px solid #e2e2e2"></div>
<div class="a" style="left:3px;top:2px;width:0;height:0;border-top:4px solid transparent;border-bottom:4px solid transparent;border-right:5px solid #3d3d3d"></div>
<div class="a" style="left:11px;top:0;width:262px;height:12px;background:#dedede"></div>
<div class="a" style="left:273px;top:0;width:363px;height:12px;background:linear-gradient(#f3f3f3,#fbfbfb)"></div>
<div class="a" style="left:636px;top:0;width:108px;height:12px;background:#dcdcdc;border-left:1px solid #d0d0d0"></div>
<div class="a" style="left:744px;top:0;width:13px;height:12px;background:#f6f6f6;border-left:1px solid #e2e2e2"></div>
<div class="a" style="left:748px;top:2px;width:0;height:0;border-top:4px solid transparent;border-bottom:4px solid transparent;border-left:5px solid #3d3d3d"></div></div>
<div id="corner" class="a"></div>

<!-- tabs -->
<div class="a tab" style="left:824px;width:59px">Layout</div>
<div class="a tab" style="left:986px;width:59px">Guides</div>
<div id="panel" class="a"><div class="a" style="left:3.0px;top:3.5px;font-size:10.3px;white-space:nowrap;color:#3a3a3a;">Item Properties</div>
<svg class="a" style="left:350px;top:4px" width="25" height="12"><rect x="1" y="1" width="10" height="10" rx="2" fill="#f3f3f3" stroke="#7a7a7a" stroke-width="1"/><rect x="4.5" y="3" width="4.5" height="4.5" fill="none" stroke="#6a6a6a" stroke-width="0.9"/><path d="M3 5 v4 h4" fill="none" stroke="#6a6a6a" stroke-width="0.9"/><rect x="13" y="1" width="10" height="10" rx="2" fill="#f3f3f3" stroke="#7a7a7a" stroke-width="1"/><path d="M15.5 3.5 L20.5 8.5 M20.5 3.5 L15.5 8.5" stroke="#333" stroke-width="1.5"/></svg>
<div class="a" style="left:0;top:36px;width:375px;height:577px;overflow:hidden">
<div class="a" style="left:29.4px;top:-4.1px;font-size:12px;white-space:nowrap;font-weight:bold;">Columns</div>
<div class="a tri" style="left:14px;top:-2.5px"></div>
<div class="a" style="left:29.4px;top:21.3px;font-size:12px;white-space:nowrap;font-weight:bold;">Symbol</div>
<div class="a tri" style="left:14px;top:23.0px"></div>
<div class="a" style="left:29.4px;top:45.8px;font-size:12px;white-space:nowrap;font-weight:bold;">WMS LegendGraphic</div>
<div class="a tri" style="left:14px;top:47.5px"></div>
<div class="a" style="left:11.0px;top:87.7px;width:341.0px;height:392.8px;background:#e7e7e7;border:1px solid #d6d6d6;border-radius:2px"></div>
<div class="a" style="left:4.0px;top:66.5px;width:350.0px;height:405.5px;border:2px solid #e0462c"></div>
<div class="a" style="left:29.4px;top:71.3px;font-size:12px;white-space:nowrap;font-weight:bold;">Spacing</div>
<div class="a trid" style="left:13px;top:74px"></div>
<div class="a" style="left:22.6px;top:98.9px;font-size:12px;white-space:nowrap;font-weight:bold;">Legend Title</div>
<div class="a" style="left:22.6px;top:122.7px;font-size:12px;white-space:nowrap;">Space below</div>
<div class="a spin" style="left:184.2px;top:119.3px;width:154.5px;height:20.5px;"><div class="a v">3,50 mm</div><div class="a dv"></div><div class="a bt"></div><div class="a" style="left:143.8px;top:3.9px;width:0;height:0;border-left:3.3px solid transparent;border-right:3.3px solid transparent;border-bottom:3.6px solid #3e3e3e"></div><div class="a" style="left:143.8px;top:11.7px;width:0;height:0;border-left:3.3px solid transparent;border-right:3.3px solid transparent;border-top:3.6px solid #4a4a4a"></div><svg class="a" style="left:119px;top:4.3px" width="13" height="9"><path d="M0.5 4.5 L4 0.5 H12.5 V8.5 H4 Z" fill="#b5b5b5"/><path d="M6 2.5 L9.5 6.5 M9.5 2.5 L6 6.5" stroke="#fff" stroke-width="1.3"/></svg></div>
<div class="a" style="left:22.6px;top:145.6px;font-size:12px;white-space:nowrap;font-weight:bold;">Groups</div>
<div class="a" style="left:22.6px;top:170.2px;font-size:12px;white-space:nowrap;">Above group</div>
<div class="a spin" style="left:184.2px;top:167.0px;width:154.5px;height:20.5px;"><div class="a v">3,00 mm</div><div class="a dv"></div><div class="a bt"></div><div class="a" style="left:143.8px;top:3.9px;width:0;height:0;border-left:3.3px solid transparent;border-right:3.3px solid transparent;border-bottom:3.6px solid #3e3e3e"></div><div class="a" style="left:143.8px;top:11.7px;width:0;height:0;border-left:3.3px solid transparent;border-right:3.3px solid transparent;border-top:3.6px solid #4a4a4a"></div><svg class="a" style="left:119px;top:4.3px" width="13" height="9"><path d="M0.5 4.5 L4 0.5 H12.5 V8.5 H4 Z" fill="#b5b5b5"/><path d="M6 2.5 L9.5 6.5 M9.5 2.5 L6 6.5" stroke="#fff" stroke-width="1.3"/></svg></div>
<div class="a" style="left:22.6px;top:197.9px;font-size:12px;white-space:nowrap;">Below group heading</div>
<div class="a spin" style="left:184.2px;top:194.7px;width:154.5px;height:20.5px;"><div class="a v">0,00 mm</div><div class="a dv"></div><div class="a bt"></div><div class="a" style="left:143.8px;top:3.9px;width:0;height:0;border-left:3.3px solid transparent;border-right:3.3px solid transparent;border-bottom:3.6px solid #3e3e3e"></div><div class="a" style="left:143.8px;top:11.7px;width:0;height:0;border-left:3.3px solid transparent;border-right:3.3px solid transparent;border-top:3.6px solid #a9a9a9"></div></div>
<div class="a" style="left:22.6px;top:221.2px;font-size:12px;white-space:nowrap;font-weight:bold;">Subgroups</div>
<div class="a" style="left:22.6px;top:245.1px;font-size:12px;white-space:nowrap;">Above subgroup</div>
<div class="a spin" style="left:184.2px;top:241.9px;width:154.5px;height:20.5px;"><div class="a v">3,00 mm</div><div class="a dv"></div><div class="a bt"></div><div class="a" style="left:143.8px;top:3.9px;width:0;height:0;border-left:3.3px solid transparent;border-right:3.3px solid transparent;border-bottom:3.6px solid #3e3e3e"></div><div class="a" style="left:143.8px;top:11.7px;width:0;height:0;border-left:3.3px solid transparent;border-right:3.3px solid transparent;border-top:3.6px solid #4a4a4a"></div><svg class="a" style="left:119px;top:4.3px" width="13" height="9"><path d="M0.5 4.5 L4 0.5 H12.5 V8.5 H4 Z" fill="#b5b5b5"/><path d="M6 2.5 L9.5 6.5 M9.5 2.5 L6 6.5" stroke="#fff" stroke-width="1.3"/></svg></div>
<div class="a" style="left:22.6px;top:273.1px;font-size:12px;white-space:nowrap;">Below subgroup heading</div>
<div class="a spin" style="left:184.2px;top:269.6px;width:154.5px;height:20.5px;"><div class="a v">0,00 mm</div><div class="a dv"></div><div class="a bt"></div><div class="a" style="left:143.8px;top:3.9px;width:0;height:0;border-left:3.3px solid transparent;border-right:3.3px solid transparent;border-bottom:3.6px solid #3e3e3e"></div><div class="a" style="left:143.8px;top:11.7px;width:0;height:0;border-left:3.3px solid transparent;border-right:3.3px solid transparent;border-top:3.6px solid #a9a9a9"></div></div>
<div class="a" style="left:22.6px;top:296.1px;font-size:12px;white-space:nowrap;font-weight:bold;">Legend Items</div>
<div class="a" style="left:22.6px;top:320.0px;font-size:12px;white-space:nowrap;">Space between symbols</div>
<div class="a spin" style="left:184.2px;top:316.8px;width:154.5px;height:20.5px;"><div class="a v">2,50 mm</div><div class="a dv"></div><div class="a bt"></div><div class="a" style="left:143.8px;top:3.9px;width:0;height:0;border-left:3.3px solid transparent;border-right:3.3px solid transparent;border-bottom:3.6px solid #3e3e3e"></div><div class="a" style="left:143.8px;top:11.7px;width:0;height:0;border-left:3.3px solid transparent;border-right:3.3px solid transparent;border-top:3.6px solid #4a4a4a"></div><svg class="a" style="left:119px;top:4.3px" width="13" height="9"><path d="M0.5 4.5 L4 0.5 H12.5 V8.5 H4 Z" fill="#b5b5b5"/><path d="M6 2.5 L9.5 6.5 M9.5 2.5 L6 6.5" stroke="#fff" stroke-width="1.3"/></svg></div>
<div class="a" style="left:22.6px;top:347.7px;font-size:12px;white-space:nowrap;">Symbol label space</div>
<div class="a spin" style="left:184.2px;top:344.5px;width:154.5px;height:20.5px;"><div class="a v">2,00 mm</div><div class="a dv"></div><div class="a bt"></div><div class="a" style="left:143.8px;top:3.9px;width:0;height:0;border-left:3.3px solid transparent;border-right:3.3px solid transparent;border-bottom:3.6px solid #3e3e3e"></div><div class="a" style="left:143.8px;top:11.7px;width:0;height:0;border-left:3.3px solid transparent;border-right:3.3px solid transparent;border-top:3.6px solid #4a4a4a"></div><svg class="a" style="left:119px;top:4.3px" width="13" height="9"><path d="M0.5 4.5 L4 0.5 H12.5 V8.5 H4 Z" fill="#b5b5b5"/><path d="M6 2.5 L9.5 6.5 M9.5 2.5 L6 6.5" stroke="#fff" stroke-width="1.3"/></svg></div>
<div class="a" style="left:22.6px;top:371.0px;font-size:12px;white-space:nowrap;font-weight:bold;">General</div>
<div class="a" style="left:22.6px;top:394.7px;font-size:12px;white-space:nowrap;">Box space</div>
<div class="a spin" style="left:184.2px;top:392.3px;width:154.5px;height:20.5px;"><div class="a v">2,00 mm</div><div class="a dv"></div><div class="a bt"></div><div class="a" style="left:143.8px;top:3.9px;width:0;height:0;border-left:3.3px solid transparent;border-right:3.3px solid transparent;border-bottom:3.6px solid #3e3e3e"></div><div class="a" style="left:143.8px;top:11.7px;width:0;height:0;border-left:3.3px solid transparent;border-right:3.3px solid transparent;border-top:3.6px solid #4a4a4a"></div><svg class="a" style="left:119px;top:4.3px" width="13" height="9"><path d="M0.5 4.5 L4 0.5 H12.5 V8.5 H4 Z" fill="#b5b5b5"/><path d="M6 2.5 L9.5 6.5 M9.5 2.5 L6 6.5" stroke="#fff" stroke-width="1.3"/></svg></div>
<div class="a" style="left:22.6px;top:422.3px;font-size:12px;white-space:nowrap;">Column space</div>
<div class="a spin" style="left:184.2px;top:420.0px;width:154.5px;height:20.5px;"><div class="a v">2,00 mm</div><div class="a dv"></div><div class="a bt"></div><div class="a" style="left:143.8px;top:3.9px;width:0;height:0;border-left:3.3px solid transparent;border-right:3.3px solid transparent;border-bottom:3.6px solid #3e3e3e"></div><div class="a" style="left:143.8px;top:11.7px;width:0;height:0;border-left:3.3px solid transparent;border-right:3.3px solid transparent;border-top:3.6px solid #4a4a4a"></div><svg class="a" style="left:119px;top:4.3px" width="13" height="9"><path d="M0.5 4.5 L4 0.5 H12.5 V8.5 H4 Z" fill="#b5b5b5"/><path d="M6 2.5 L9.5 6.5 M9.5 2.5 L6 6.5" stroke="#fff" stroke-width="1.3"/></svg></div>
<div class="a" style="left:22.6px;top:450.1px;font-size:12px;white-space:nowrap;">Line space</div>
<div class="a spin" style="left:184.2px;top:447.8px;width:154.5px;height:20.5px;"><div class="a v">1,00 mm</div><div class="a dv"></div><div class="a bt"></div><div class="a" style="left:143.8px;top:3.9px;width:0;height:0;border-left:3.3px solid transparent;border-right:3.3px solid transparent;border-bottom:3.6px solid #3e3e3e"></div><div class="a" style="left:143.8px;top:11.7px;width:0;height:0;border-left:3.3px solid transparent;border-right:3.3px solid transparent;border-top:3.6px solid #4a4a4a"></div><svg class="a" style="left:119px;top:4.3px" width="13" height="9"><path d="M0.5 4.5 L4 0.5 H12.5 V8.5 H4 Z" fill="#b5b5b5"/><path d="M6 2.5 L9.5 6.5 M9.5 2.5 L6 6.5" stroke="#fff" stroke-width="1.3"/></svg></div>
<div class="a" style="left:29.4px;top:487.2px;font-size:12px;white-space:nowrap;font-weight:bold;">Position and Size</div>
<div class="a tri" style="left:14px;top:488.5px"></div>
<div class="a" style="left:29.4px;top:512.1px;font-size:12px;white-space:nowrap;font-weight:bold;">Rotation</div>
<div class="a tri" style="left:14px;top:513.5px"></div>
<div class="a" style="left:47.4px;top:533.1px;font-size:12px;white-space:nowrap;font-weight:bold;">Frame</div>
<div class="a tri" style="left:14px;top:534.5px"></div>
<div class="a" style="left:47.4px;top:554.5px;font-size:12px;white-space:nowrap;font-weight:bold;">Background</div>
<div class="a tri" style="left:14px;top:556.0px"></div>
<div class="a" style="left:27.9px;top:534.0px;width:11.9px;height:11.8px;background:#fff;border:1px solid #cfcfcf;border-radius:2px"></div>
<div class="a" style="left:27.9px;top:555.4px;width:11.9px;height:12.0px;background:#fff;border:1px solid #cfcfcf;border-radius:2px"><svg class="a" style="left:1px;top:1px" width="10" height="10"><path d="M2 5.2 L4.2 8.6 L7.6 1.2" fill="none" stroke="#111" stroke-width="1.3"/></svg></div>
<div class="a" style="left:362.0px;top:0.0px;width:13.0px;height:577.0px;background:#e9e9e9;border-left:1px solid #dedede"></div>
<div class="a" style="left:362.0px;top:0.0px;width:13.0px;height:12.5px;background:#f7f7f7;border-left:1px solid #dedede"></div>
<div class="a up" style="left:364.5px;top:3.5px;border-bottom-color:#3d3d3d"></div>
<div class="a" style="left:362.0px;top:12.5px;width:13.0px;height:250.5px;background:#dedede;border-left:1px solid #d2d2d2"></div>
<div class="a" style="left:362.0px;top:263.0px;width:13.0px;height:256.0px;background:#f8f8f8;border-left:1px solid #dedede"></div>
<div class="a" style="left:362.0px;top:519.0px;width:13.0px;height:46.0px;background:#dedede;border-left:1px solid #d2d2d2"></div>
<div class="a" style="left:362.0px;top:565.0px;width:13.0px;height:12.0px;background:#f7f7f7;border-left:1px solid #dedede"></div>
<div class="a dn" style="left:364.5px;top:568.5px;border-top-color:#3d3d3d"></div>
</div>
<div class="a" style="left:0.0px;top:18.0px;width:375.0px;height:18.0px;background:#c9c9c9"></div>
<div class="a" style="left:4.0px;top:20.3px;font-size:12px;white-space:nowrap;font-weight:bold;color:#111;">Legend</div></div>
<div class="a tab sel" style="left:883px;width:104px">Item Properties</div>

<!-- status -->
<div id="status" class="a"><div class="a s" style="left:5.5px;top:7.3px;font-size:12px;color:#1e1e1e;white-space:nowrap">1 item selected</div>
<div class="a s" style="left:686.8px;top:7.3px;font-size:12px;color:#1e1e1e;white-space:nowrap">x: 213.04 mm</div>
<div class="a s" style="left:782.6px;top:7.3px;font-size:12px;color:#1e1e1e;white-space:nowrap">y: 64.5404 mm</div>
<div class="a s" style="left:876.7px;top:7.3px;font-size:12px;color:#1e1e1e;white-space:nowrap">page: 1</div>
<div class="a" style="left:971px;top:4.5px;width:112.5px;height:20px;background:#fff;border:1px solid #c6c6c6;border-radius:3px;box-shadow:0 1px 0 #d6d6d6"><div class="a" style="left:3px;top:1.9px;font-size:12px;color:#111">185.3%</div><div class="a" style="left:94px;top:0;width:17px;height:18px;background:#f8f8f8;border-left:1px solid #dcdcdc;border-radius:0 3px 3px 0"></div><div class="a dn" style="left:98.5px;top:7px;border-top-color:#555"></div></div>
<div class="a" style="left:1089.5px;top:11.5px;width:88px;height:5px;background:#dcdcdc;border:1px solid #c2c2c2;border-radius:3px"></div>
<div class="a" style="left:1089.5px;top:11.5px;width:20px;height:5px;background:#4a90e2;border:1px solid #3b7dd0;border-radius:3px"></div>
<div class="a" style="left:1106px;top:8px;width:12px;height:11.5px;background:#fafafa;border:1px solid #b9b9b9;border-radius:3px;box-shadow:0 0.5px 1px rgba(0,0,0,.2)"></div>
<div class="a" style="left:1185px;top:13px;width:12px;height:12px;background-image:radial-gradient(circle,#c8c8c8 0.7px,transparent 0.9px);background-size:3px 3px;clip-path:polygon(100% 0,100% 100%,0 100%)"></div></div>

</body></html>
